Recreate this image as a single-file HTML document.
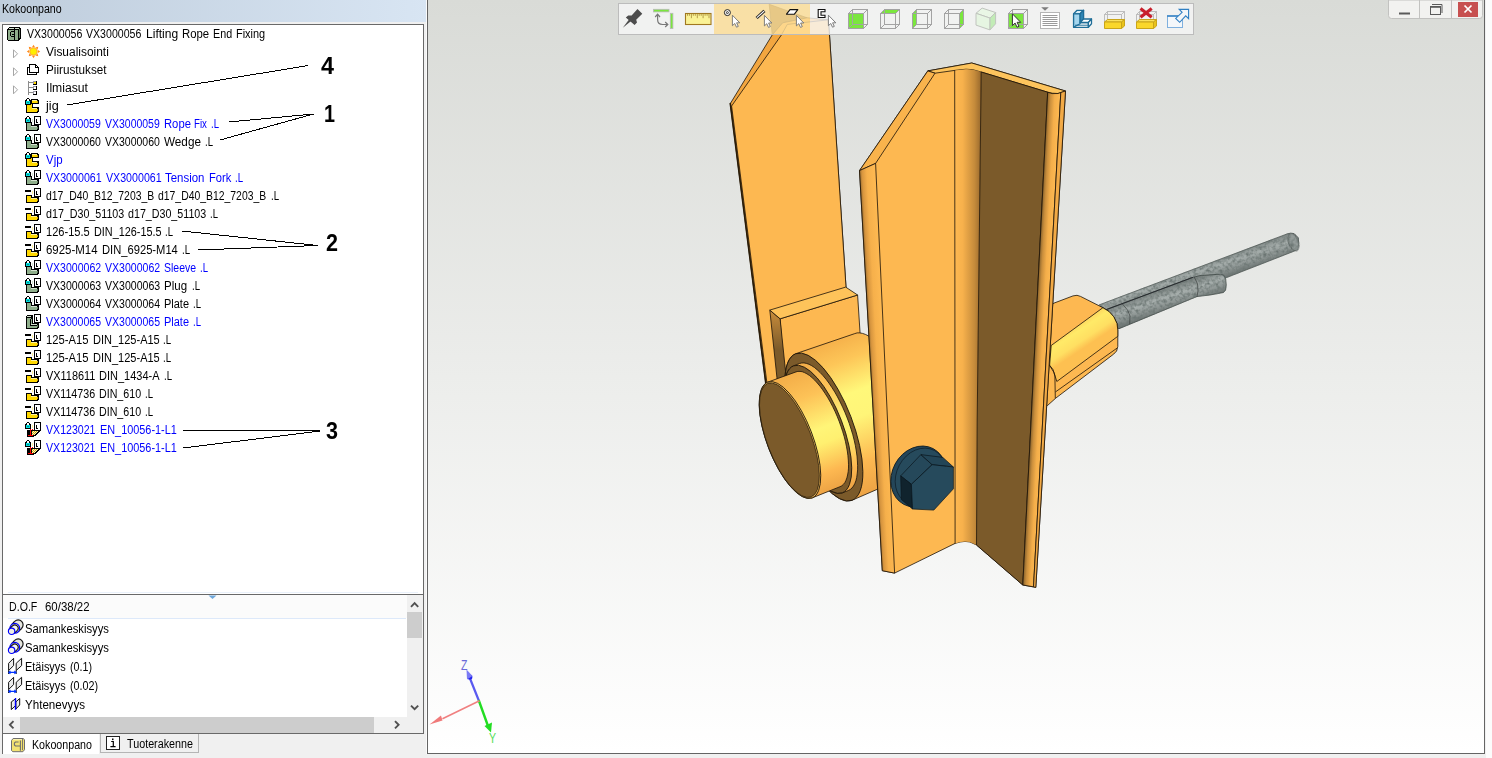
<!DOCTYPE html><html><head><meta charset="utf-8"><title>Kokoonpano</title><style>
html,body{margin:0;padding:0}body{width:1492px;height:758px;overflow:hidden;background:#f0f0f0;position:relative;font:12px 'Liberation Sans', sans-serif}
.a{position:absolute}.t{position:absolute;white-space:pre;line-height:16px;height:16px}.w{display:inline-block;transform-origin:0 50%}
svg{position:absolute;overflow:visible}
</style></head><body>
<div class="a" style="left:0;top:0;width:427px;height:22px;background:linear-gradient(to right,#bfcddc,#d8e5f3)"></div>
<div class="a" style="left:2px;top:24px;width:420px;height:729px;background:#fff;border-left:1px solid #696969;border-right:1px solid #696969;border-top:1px solid #696969"></div>
<div class="a" style="left:2px;top:594px;width:422px;height:1px;background:#696969"></div>
<div class="a" style="left:8px;top:592px;width:410px;height:1px;background:#eaf1fb"></div>
<div class="a" style="left:3px;top:595px;width:404px;height:23px;background:#fbfbfb"></div>
<div class="a" style="left:8px;top:618px;width:398px;height:1px;background:#dde9fa"></div>
<svg class="a" style="left:208px;top:595px" width="10" height="5"><path d="M0.5 0.5h8l-4 3.5z" fill="#6fa8dc"/></svg>
<div class="a" style="left:407px;top:595px;width:16px;height:122px;background:#f0f0f0"></div>
<div class="a" style="left:407px;top:612px;width:15px;height:26px;background:#cdcdcd"></div>
<svg class="a" style="left:407px;top:595px" width="16" height="122"><path d="M4 11.8l3.6-3.6l3.6 3.6" fill="none" stroke="#505050" stroke-width="1.9"/><path d="M4 110.6l3.6 3.6l3.6-3.6" fill="none" stroke="#505050" stroke-width="1.9"/></svg>
<div class="a" style="left:3px;top:717px;width:420px;height:16px;background:#f0f0f0"></div>
<div class="a" style="left:20px;top:717px;width:354px;height:16px;background:#cdcdcd"></div>
<svg class="a" style="left:3px;top:717px" width="420" height="16"><path d="M10.5 4.2l-3.6 3.6l3.6 3.6" fill="none" stroke="#505050" stroke-width="1.9"/><path d="M392 4.2l3.6 3.6l-3.6 3.6" fill="none" stroke="#505050" stroke-width="1.9"/></svg>
<div class="a" style="left:2px;top:733px;width:422px;height:1px;background:#696969"></div>
<div class="a" style="left:3px;top:734px;width:96px;height:20px;background:#fff"></div>
<div class="a" style="left:99px;top:734px;width:325px;height:20px;background:#f0f0f0"></div>
<div class="a" style="left:100px;top:734px;width:97px;height:18px;background:#f0f0f0;border-right:1px solid #b5b5b5;border-bottom:1px solid #b5b5b5;border-left:1px solid #b5b5b5"></div>
<div class="a" style="left:423px;top:734px;width:1px;height:20px;background:#f0f0f0"></div>
<svg class="a" style="left:11px;top:737px" width="16" height="16"><path d="M0.5 3.5l1.6-2h10l1.4 1.2v10l-1.6 2h-10l-1.4-1.2z" fill="#f3e272" stroke="#6e6e6e" stroke-linejoin="round"/><path d="M2.3 2.6h9.2" stroke="#fbf4b8"/><path d="M11.5 2v11.2" stroke="#6e6e6e" stroke-width="0.9"/><path d="M7.6 5h-3.2l-1 1v2l1 1h3.2M9.4 3.4v10.4M5.4 9v0M7.6 9h1.8" stroke="#6e6e6e" fill="none" stroke-width="1.1"/></svg>
<svg class="a" style="left:106px;top:736px" width="15" height="15"><rect x="0.5" y="0.5" width="13" height="13" fill="#fff" stroke="#222"/><path d="M5.2 5.5h2.1v5M4.4 10.6h5.2" stroke="#000" fill="none" stroke-width="1.2"/><rect x="6" y="2.5" width="1.5" height="1.6" fill="#000"/></svg>
<svg class="a" style="left:7px;top:27px" width="16" height="16" shape-rendering="crispEdges"><path fill="#000" d="M2 0h11v1h-11zM1 1h1v1h-1zM7 1h1v1h-1zM12 1h2v1h-2zM0 2h12v1h-12zM13 2h1v1h-1zM0 3h1v1h-1zM7 3h1v1h-1zM11 3h1v1h-1zM13 3h1v1h-1zM0 4h1v1h-1zM4 4h4v1h-4zM11 4h1v1h-1zM13 4h1v1h-1zM0 5h1v1h-1zM3 5h1v1h-1zM7 5h1v1h-1zM11 5h1v1h-1zM13 5h1v1h-1zM0 6h1v1h-1zM3 6h1v1h-1zM7 6h1v1h-1zM11 6h1v1h-1zM13 6h1v1h-1zM0 7h1v1h-1zM3 7h1v1h-1zM5 7h3v1h-3zM11 7h1v1h-1zM13 7h1v1h-1zM0 8h1v1h-1zM3 8h1v1h-1zM7 8h1v1h-1zM11 8h1v1h-1zM13 8h1v1h-1zM0 9h1v1h-1zM4 9h4v1h-4zM11 9h1v1h-1zM13 9h1v1h-1zM0 10h1v1h-1zM7 10h1v1h-1zM11 10h1v1h-1zM13 10h1v1h-1zM0 11h1v1h-1zM7 11h1v1h-1zM11 11h3v1h-3zM0 12h1v1h-1zM7 12h1v1h-1zM11 12h2v1h-2zM1 13h11v1h-11z"/><path fill="#d3e2cf" d="M2 1h5v1h-5zM8 1h4v1h-4z"/><path fill="#5f7e5b" d="M12 2h1v1h-1zM12 3h1v1h-1zM12 4h1v1h-1zM12 5h1v1h-1zM12 6h1v1h-1zM12 7h1v1h-1zM12 8h1v1h-1zM12 9h1v1h-1zM12 10h1v1h-1z"/><path fill="#8fae8b" d="M1 3h6v1h-6zM8 3h3v1h-3zM1 4h3v1h-3zM8 4h3v1h-3zM1 5h2v1h-2zM4 5h3v1h-3zM8 5h3v1h-3zM1 6h2v1h-2zM4 6h3v1h-3zM8 6h3v1h-3zM1 7h2v1h-2zM4 7h1v1h-1zM8 7h3v1h-3zM1 8h2v1h-2zM4 8h3v1h-3zM8 8h3v1h-3zM1 9h3v1h-3zM8 9h3v1h-3zM1 10h6v1h-6zM8 10h3v1h-3zM1 11h6v1h-6zM8 11h3v1h-3zM1 12h6v1h-6zM8 12h3v1h-3z"/></svg>
<svg class="a" style="left:25px;top:43px" width="16" height="18" shape-rendering="crispEdges"><g transform="translate(8.5,8.5)" shape-rendering="geometricPrecision"><path d="M-1.7 -4.1L0 -6.7L1.7 -4.1z" fill="#ff8a1e" transform="rotate(0)"/><path d="M-1.7 -4.1L0 -6.7L1.7 -4.1z" fill="#ff8a1e" transform="rotate(45)"/><path d="M-1.7 -4.1L0 -6.7L1.7 -4.1z" fill="#ff8a1e" transform="rotate(90)"/><path d="M-1.7 -4.1L0 -6.7L1.7 -4.1z" fill="#ff8a1e" transform="rotate(135)"/><path d="M-1.7 -4.1L0 -6.7L1.7 -4.1z" fill="#ff8a1e" transform="rotate(180)"/><path d="M-1.7 -4.1L0 -6.7L1.7 -4.1z" fill="#ff8a1e" transform="rotate(225)"/><path d="M-1.7 -4.1L0 -6.7L1.7 -4.1z" fill="#ff8a1e" transform="rotate(270)"/><path d="M-1.7 -4.1L0 -6.7L1.7 -4.1z" fill="#ff8a1e" transform="rotate(315)"/><circle r="3.6" fill="#ffee00" stroke="#ffa726" stroke-width="0.8"/></g></svg>
<svg class="a" style="left:12px;top:49px" width="8" height="10"><path d="M1.5 0.8l4 4l-4 4z" fill="#fff" stroke="#a6a6a6"/></svg>
<svg class="a" style="left:25px;top:61px" width="16" height="18" shape-rendering="crispEdges"><path fill="#000" d="M4 3h7v1h-7zM4 4h1v1h-1zM10 4h2v1h-2zM4 5h1v1h-1zM10 5h1v1h-1zM12 5h1v1h-1zM2 6h3v1h-3zM10 6h4v1h-4zM2 7h1v1h-1zM4 7h1v1h-1zM13 7h1v1h-1zM2 8h1v1h-1zM4 8h1v1h-1zM13 8h1v1h-1zM2 9h1v1h-1zM4 9h1v1h-1zM13 9h1v1h-1zM2 10h1v1h-1zM4 10h1v1h-1zM13 10h1v1h-1zM2 11h1v1h-1zM4 11h10v1h-10zM2 12h1v1h-1zM11 12h1v1h-1zM2 13h10v1h-10z"/><path fill="#fff" d="M5 4h5v1h-5zM5 5h5v1h-5zM11 5h1v1h-1zM5 6h5v1h-5zM3 7h1v1h-1zM5 7h8v1h-8zM3 8h1v1h-1zM5 8h8v1h-8zM3 9h1v1h-1zM5 9h8v1h-8zM3 10h1v1h-1zM5 10h8v1h-8zM3 11h1v1h-1zM3 12h8v1h-8z"/></svg>
<svg class="a" style="left:12px;top:67px" width="8" height="10"><path d="M1.5 0.8l4 4l-4 4z" fill="#fff" stroke="#a6a6a6"/></svg>
<svg class="a" style="left:25px;top:79px" width="16" height="18" shape-rendering="crispEdges"><path fill="#8c8c8c" d="M3 2h1v1h-1zM3 3h5v1h-5zM3 4h1v1h-1zM3 5h1v1h-1zM3 6h1v1h-1zM3 7h1v1h-1zM3 8h5v1h-5zM3 9h1v1h-1zM3 10h1v1h-1zM3 11h1v1h-1zM3 12h1v1h-1zM3 13h5v1h-5zM3 14h1v1h-1zM3 15h1v1h-1z"/><path fill="#9a9aa8" d="M8 2h3v1h-3zM8 3h1v1h-1zM8 4h1v1h-1zM8 7h3v1h-3zM8 8h1v1h-1zM8 9h1v1h-1zM8 12h3v1h-3zM8 13h1v1h-1zM8 14h1v1h-1z"/><path fill="#000" d="M11 2h1v1h-1zM11 3h1v1h-1zM11 4h1v1h-1zM8 5h4v1h-4zM11 7h1v1h-1zM11 8h1v1h-1zM11 9h1v1h-1zM8 10h4v1h-4zM11 12h1v1h-1zM11 13h1v1h-1zM11 14h1v1h-1zM8 15h4v1h-4z"/><path fill="#ffd800" d="M9 3h2v1h-2zM9 4h2v1h-2z"/><path fill="#fff" d="M9 8h2v1h-2zM9 9h2v1h-2zM9 13h2v1h-2zM9 14h2v1h-2z"/></svg>
<svg class="a" style="left:12px;top:85px" width="8" height="10"><path d="M1.5 0.8l4 4l-4 4z" fill="#fff" stroke="#a6a6a6"/></svg>
<svg class="a" style="left:25px;top:97px" width="16" height="18" shape-rendering="crispEdges"><path fill="#000" d="M2 1h2v1h-2zM1 2h1v1h-1zM4 2h1v1h-1zM6 2h7v1h-7zM0 3h2v1h-2zM4 3h3v1h-3zM12 3h2v1h-2zM0 4h1v1h-1zM5 4h2v1h-2zM13 4h1v1h-1zM0 5h1v1h-1zM5 5h2v1h-2zM13 5h1v1h-1zM0 6h1v1h-1zM5 6h9v1h-9zM0 7h6v1h-6zM7 7h1v1h-1zM1 8h1v1h-1zM7 8h1v1h-1zM1 9h1v1h-1zM7 9h1v1h-1zM1 10h1v1h-1zM7 10h7v1h-7zM1 11h1v1h-1zM12 11h2v1h-2zM1 12h1v1h-1zM13 12h1v1h-1zM1 13h1v1h-1zM13 13h1v1h-1zM1 14h1v1h-1zM12 14h2v1h-2zM1 15h12v1h-12z"/><path fill="#fff" d="M2 2h2v1h-2zM2 3h2v1h-2z"/><path fill="#fff29a" d="M7 3h5v1h-5zM7 11h5v1h-5z"/><path fill="#00e0e0" d="M1 4h4v1h-4zM1 5h1v1h-1zM4 5h1v1h-1zM1 6h4v1h-4z"/><path fill="#ffd800" d="M7 4h5v1h-5zM7 5h5v1h-5zM6 7h1v1h-1zM2 8h5v1h-5zM2 9h5v1h-5zM2 10h5v1h-5zM2 11h5v1h-5zM2 12h10v1h-10zM2 13h10v1h-10zM2 14h10v1h-10z"/><path fill="#caa000" d="M12 4h1v1h-1zM12 5h1v1h-1zM12 12h1v1h-1zM12 13h1v1h-1z"/><path fill="#008c8c" d="M2 5h2v1h-2z"/></svg>
<svg class="a" style="left:25px;top:115px" width="16" height="18" shape-rendering="crispEdges"><path fill="#000" d="M2 1h2v1h-2zM9 1h7v1h-7zM1 2h1v1h-1zM4 2h1v1h-1zM9 2h1v1h-1zM15 2h1v1h-1zM0 3h2v1h-2zM4 3h2v1h-2zM9 3h1v1h-1zM15 3h1v1h-1zM0 4h1v1h-1zM5 4h1v1h-1zM9 4h1v1h-1zM11 4h1v1h-1zM15 4h1v1h-1zM0 5h1v1h-1zM5 5h1v1h-1zM9 5h1v1h-1zM11 5h1v1h-1zM15 5h1v1h-1zM0 6h1v1h-1zM5 6h1v1h-1zM9 6h1v1h-1zM11 6h1v1h-1zM15 6h1v1h-1zM0 7h7v1h-7zM9 7h1v1h-1zM11 7h2v1h-2zM15 7h1v1h-1zM1 8h1v1h-1zM6 8h1v1h-1zM9 8h1v1h-1zM15 8h1v1h-1zM1 9h1v1h-1zM6 9h1v1h-1zM9 9h7v1h-7zM1 10h1v1h-1zM6 10h8v1h-8zM1 11h1v1h-1zM12 11h2v1h-2zM1 12h1v1h-1zM13 12h1v1h-1zM1 13h1v1h-1zM13 13h1v1h-1zM1 14h1v1h-1zM12 14h2v1h-2zM1 15h12v1h-12z"/><path fill="#fff" d="M2 2h2v1h-2zM10 2h5v1h-5zM2 3h2v1h-2zM10 3h5v1h-5zM10 4h1v1h-1zM12 4h3v1h-3zM10 5h1v1h-1zM12 5h3v1h-3zM10 6h1v1h-1zM12 6h3v1h-3zM10 7h1v1h-1zM13 7h2v1h-2zM10 8h5v1h-5z"/><path fill="#00e0e0" d="M1 4h4v1h-4zM1 5h1v1h-1zM4 5h1v1h-1zM1 6h4v1h-4z"/><path fill="#d3e2cf" d="M7 4h1v1h-1zM7 5h1v1h-1zM7 6h1v1h-1zM6 11h6v1h-6z"/><path fill="#008c8c" d="M2 5h2v1h-2z"/><path fill="#8fae8b" d="M2 8h4v1h-4zM2 9h4v1h-4zM2 10h4v1h-4zM2 11h4v1h-4zM2 12h10v1h-10zM2 13h10v1h-10zM2 14h10v1h-10z"/><path fill="#5f7e5b" d="M12 12h1v1h-1zM12 13h1v1h-1z"/></svg>
<svg class="a" style="left:25px;top:133px" width="16" height="18" shape-rendering="crispEdges"><path fill="#000" d="M2 1h2v1h-2zM9 1h7v1h-7zM1 2h1v1h-1zM4 2h1v1h-1zM9 2h1v1h-1zM15 2h1v1h-1zM0 3h2v1h-2zM4 3h2v1h-2zM9 3h1v1h-1zM15 3h1v1h-1zM0 4h1v1h-1zM5 4h1v1h-1zM9 4h1v1h-1zM11 4h1v1h-1zM15 4h1v1h-1zM0 5h1v1h-1zM5 5h1v1h-1zM9 5h1v1h-1zM11 5h1v1h-1zM15 5h1v1h-1zM0 6h1v1h-1zM5 6h1v1h-1zM9 6h1v1h-1zM11 6h1v1h-1zM15 6h1v1h-1zM0 7h7v1h-7zM9 7h1v1h-1zM11 7h2v1h-2zM15 7h1v1h-1zM1 8h1v1h-1zM6 8h1v1h-1zM9 8h1v1h-1zM15 8h1v1h-1zM1 9h1v1h-1zM6 9h1v1h-1zM9 9h7v1h-7zM1 10h1v1h-1zM6 10h8v1h-8zM1 11h1v1h-1zM12 11h2v1h-2zM1 12h1v1h-1zM13 12h1v1h-1zM1 13h1v1h-1zM13 13h1v1h-1zM1 14h1v1h-1zM12 14h2v1h-2zM1 15h12v1h-12z"/><path fill="#fff" d="M2 2h2v1h-2zM10 2h5v1h-5zM2 3h2v1h-2zM10 3h5v1h-5zM10 4h1v1h-1zM12 4h3v1h-3zM10 5h1v1h-1zM12 5h3v1h-3zM10 6h1v1h-1zM12 6h3v1h-3zM10 7h1v1h-1zM13 7h2v1h-2zM10 8h5v1h-5z"/><path fill="#00e0e0" d="M1 4h4v1h-4zM1 5h1v1h-1zM4 5h1v1h-1zM1 6h4v1h-4z"/><path fill="#d3e2cf" d="M7 4h1v1h-1zM7 5h1v1h-1zM7 6h1v1h-1zM6 11h6v1h-6z"/><path fill="#008c8c" d="M2 5h2v1h-2z"/><path fill="#8fae8b" d="M2 8h4v1h-4zM2 9h4v1h-4zM2 10h4v1h-4zM2 11h4v1h-4zM2 12h10v1h-10zM2 13h10v1h-10zM2 14h10v1h-10z"/><path fill="#5f7e5b" d="M12 12h1v1h-1zM12 13h1v1h-1z"/></svg>
<svg class="a" style="left:25px;top:151px" width="16" height="18" shape-rendering="crispEdges"><path fill="#000" d="M2 1h2v1h-2zM1 2h1v1h-1zM4 2h1v1h-1zM6 2h7v1h-7zM0 3h2v1h-2zM4 3h3v1h-3zM12 3h2v1h-2zM0 4h1v1h-1zM5 4h2v1h-2zM13 4h1v1h-1zM0 5h1v1h-1zM5 5h2v1h-2zM13 5h1v1h-1zM0 6h1v1h-1zM5 6h9v1h-9zM0 7h6v1h-6zM7 7h1v1h-1zM1 8h1v1h-1zM7 8h1v1h-1zM1 9h1v1h-1zM7 9h1v1h-1zM1 10h1v1h-1zM7 10h7v1h-7zM1 11h1v1h-1zM12 11h2v1h-2zM1 12h1v1h-1zM13 12h1v1h-1zM1 13h1v1h-1zM13 13h1v1h-1zM1 14h1v1h-1zM12 14h2v1h-2zM1 15h12v1h-12z"/><path fill="#fff" d="M2 2h2v1h-2zM2 3h2v1h-2z"/><path fill="#fff29a" d="M7 3h5v1h-5zM7 11h5v1h-5z"/><path fill="#00e0e0" d="M1 4h4v1h-4zM1 5h1v1h-1zM4 5h1v1h-1zM1 6h4v1h-4z"/><path fill="#ffd800" d="M7 4h5v1h-5zM7 5h5v1h-5zM6 7h1v1h-1zM2 8h5v1h-5zM2 9h5v1h-5zM2 10h5v1h-5zM2 11h5v1h-5zM2 12h10v1h-10zM2 13h10v1h-10zM2 14h10v1h-10z"/><path fill="#caa000" d="M12 4h1v1h-1zM12 5h1v1h-1zM12 12h1v1h-1zM12 13h1v1h-1z"/><path fill="#008c8c" d="M2 5h2v1h-2z"/></svg>
<svg class="a" style="left:25px;top:169px" width="16" height="18" shape-rendering="crispEdges"><path fill="#000" d="M2 1h2v1h-2zM9 1h7v1h-7zM1 2h1v1h-1zM4 2h1v1h-1zM9 2h1v1h-1zM15 2h1v1h-1zM0 3h2v1h-2zM4 3h2v1h-2zM9 3h1v1h-1zM15 3h1v1h-1zM0 4h1v1h-1zM5 4h1v1h-1zM9 4h1v1h-1zM11 4h1v1h-1zM15 4h1v1h-1zM0 5h1v1h-1zM5 5h1v1h-1zM9 5h1v1h-1zM11 5h1v1h-1zM15 5h1v1h-1zM0 6h1v1h-1zM5 6h1v1h-1zM9 6h1v1h-1zM11 6h1v1h-1zM15 6h1v1h-1zM0 7h7v1h-7zM9 7h1v1h-1zM11 7h2v1h-2zM15 7h1v1h-1zM1 8h1v1h-1zM6 8h1v1h-1zM9 8h1v1h-1zM15 8h1v1h-1zM1 9h1v1h-1zM6 9h1v1h-1zM9 9h7v1h-7zM1 10h1v1h-1zM6 10h8v1h-8zM1 11h1v1h-1zM12 11h2v1h-2zM1 12h1v1h-1zM13 12h1v1h-1zM1 13h1v1h-1zM13 13h1v1h-1zM1 14h1v1h-1zM12 14h2v1h-2zM1 15h12v1h-12z"/><path fill="#fff" d="M2 2h2v1h-2zM10 2h5v1h-5zM2 3h2v1h-2zM10 3h5v1h-5zM10 4h1v1h-1zM12 4h3v1h-3zM10 5h1v1h-1zM12 5h3v1h-3zM10 6h1v1h-1zM12 6h3v1h-3zM10 7h1v1h-1zM13 7h2v1h-2zM10 8h5v1h-5z"/><path fill="#00e0e0" d="M1 4h4v1h-4zM1 5h1v1h-1zM4 5h1v1h-1zM1 6h4v1h-4z"/><path fill="#d3e2cf" d="M7 4h1v1h-1zM7 5h1v1h-1zM7 6h1v1h-1zM6 11h6v1h-6z"/><path fill="#008c8c" d="M2 5h2v1h-2z"/><path fill="#8fae8b" d="M2 8h4v1h-4zM2 9h4v1h-4zM2 10h4v1h-4zM2 11h4v1h-4zM2 12h10v1h-10zM2 13h10v1h-10zM2 14h10v1h-10z"/><path fill="#5f7e5b" d="M12 12h1v1h-1zM12 13h1v1h-1z"/></svg>
<svg class="a" style="left:25px;top:187px" width="16" height="18" shape-rendering="crispEdges"><path fill="#000" d="M9 1h7v1h-7zM9 2h1v1h-1zM15 2h1v1h-1zM0 3h6v1h-6zM9 3h1v1h-1zM15 3h1v1h-1zM0 4h6v1h-6zM9 4h1v1h-1zM11 4h1v1h-1zM15 4h1v1h-1zM9 5h1v1h-1zM11 5h1v1h-1zM15 5h1v1h-1zM9 6h1v1h-1zM11 6h1v1h-1zM15 6h1v1h-1zM9 7h1v1h-1zM11 7h2v1h-2zM15 7h1v1h-1zM1 8h6v1h-6zM9 8h1v1h-1zM15 8h1v1h-1zM1 9h1v1h-1zM6 9h1v1h-1zM9 9h7v1h-7zM1 10h1v1h-1zM6 10h8v1h-8zM1 11h1v1h-1zM12 11h2v1h-2zM1 12h1v1h-1zM13 12h1v1h-1zM1 13h1v1h-1zM13 13h1v1h-1zM1 14h1v1h-1zM12 14h2v1h-2zM1 15h12v1h-12z"/><path fill="#fff" d="M10 2h5v1h-5zM10 3h5v1h-5zM10 4h1v1h-1zM12 4h3v1h-3zM10 5h1v1h-1zM12 5h3v1h-3zM10 6h1v1h-1zM12 6h3v1h-3zM10 7h1v1h-1zM13 7h2v1h-2zM10 8h5v1h-5z"/><path fill="#fff29a" d="M7 4h1v1h-1zM7 5h1v1h-1zM7 6h1v1h-1zM6 11h6v1h-6z"/><path fill="#ffd800" d="M2 9h4v1h-4zM2 10h4v1h-4zM2 11h4v1h-4zM2 12h10v1h-10zM2 13h10v1h-10zM2 14h10v1h-10z"/><path fill="#caa000" d="M12 12h1v1h-1zM12 13h1v1h-1z"/></svg>
<svg class="a" style="left:25px;top:205px" width="16" height="18" shape-rendering="crispEdges"><path fill="#000" d="M9 1h7v1h-7zM9 2h1v1h-1zM15 2h1v1h-1zM0 3h6v1h-6zM9 3h1v1h-1zM15 3h1v1h-1zM0 4h6v1h-6zM9 4h1v1h-1zM11 4h1v1h-1zM15 4h1v1h-1zM9 5h1v1h-1zM11 5h1v1h-1zM15 5h1v1h-1zM9 6h1v1h-1zM11 6h1v1h-1zM15 6h1v1h-1zM9 7h1v1h-1zM11 7h2v1h-2zM15 7h1v1h-1zM1 8h6v1h-6zM9 8h1v1h-1zM15 8h1v1h-1zM1 9h1v1h-1zM6 9h1v1h-1zM9 9h7v1h-7zM1 10h1v1h-1zM6 10h8v1h-8zM1 11h1v1h-1zM12 11h2v1h-2zM1 12h1v1h-1zM13 12h1v1h-1zM1 13h1v1h-1zM13 13h1v1h-1zM1 14h1v1h-1zM12 14h2v1h-2zM1 15h12v1h-12z"/><path fill="#fff" d="M10 2h5v1h-5zM10 3h5v1h-5zM10 4h1v1h-1zM12 4h3v1h-3zM10 5h1v1h-1zM12 5h3v1h-3zM10 6h1v1h-1zM12 6h3v1h-3zM10 7h1v1h-1zM13 7h2v1h-2zM10 8h5v1h-5z"/><path fill="#fff29a" d="M7 4h1v1h-1zM7 5h1v1h-1zM7 6h1v1h-1zM6 11h6v1h-6z"/><path fill="#ffd800" d="M2 9h4v1h-4zM2 10h4v1h-4zM2 11h4v1h-4zM2 12h10v1h-10zM2 13h10v1h-10zM2 14h10v1h-10z"/><path fill="#caa000" d="M12 12h1v1h-1zM12 13h1v1h-1z"/></svg>
<svg class="a" style="left:25px;top:223px" width="16" height="18" shape-rendering="crispEdges"><path fill="#000" d="M9 1h7v1h-7zM9 2h1v1h-1zM15 2h1v1h-1zM0 3h6v1h-6zM9 3h1v1h-1zM15 3h1v1h-1zM0 4h6v1h-6zM9 4h1v1h-1zM11 4h1v1h-1zM15 4h1v1h-1zM9 5h1v1h-1zM11 5h1v1h-1zM15 5h1v1h-1zM9 6h1v1h-1zM11 6h1v1h-1zM15 6h1v1h-1zM9 7h1v1h-1zM11 7h2v1h-2zM15 7h1v1h-1zM1 8h6v1h-6zM9 8h1v1h-1zM15 8h1v1h-1zM1 9h1v1h-1zM6 9h1v1h-1zM9 9h7v1h-7zM1 10h1v1h-1zM6 10h8v1h-8zM1 11h1v1h-1zM12 11h2v1h-2zM1 12h1v1h-1zM13 12h1v1h-1zM1 13h1v1h-1zM13 13h1v1h-1zM1 14h1v1h-1zM12 14h2v1h-2zM1 15h12v1h-12z"/><path fill="#fff" d="M10 2h5v1h-5zM10 3h5v1h-5zM10 4h1v1h-1zM12 4h3v1h-3zM10 5h1v1h-1zM12 5h3v1h-3zM10 6h1v1h-1zM12 6h3v1h-3zM10 7h1v1h-1zM13 7h2v1h-2zM10 8h5v1h-5z"/><path fill="#fff29a" d="M7 4h1v1h-1zM7 5h1v1h-1zM7 6h1v1h-1zM6 11h6v1h-6z"/><path fill="#ffd800" d="M2 9h4v1h-4zM2 10h4v1h-4zM2 11h4v1h-4zM2 12h10v1h-10zM2 13h10v1h-10zM2 14h10v1h-10z"/><path fill="#caa000" d="M12 12h1v1h-1zM12 13h1v1h-1z"/></svg>
<svg class="a" style="left:25px;top:241px" width="16" height="18" shape-rendering="crispEdges"><path fill="#000" d="M9 1h7v1h-7zM9 2h1v1h-1zM15 2h1v1h-1zM0 3h6v1h-6zM9 3h1v1h-1zM15 3h1v1h-1zM0 4h6v1h-6zM9 4h1v1h-1zM11 4h1v1h-1zM15 4h1v1h-1zM9 5h1v1h-1zM11 5h1v1h-1zM15 5h1v1h-1zM9 6h1v1h-1zM11 6h1v1h-1zM15 6h1v1h-1zM9 7h1v1h-1zM11 7h2v1h-2zM15 7h1v1h-1zM1 8h6v1h-6zM9 8h1v1h-1zM15 8h1v1h-1zM1 9h1v1h-1zM6 9h1v1h-1zM9 9h7v1h-7zM1 10h1v1h-1zM6 10h8v1h-8zM1 11h1v1h-1zM12 11h2v1h-2zM1 12h1v1h-1zM13 12h1v1h-1zM1 13h1v1h-1zM13 13h1v1h-1zM1 14h1v1h-1zM12 14h2v1h-2zM1 15h12v1h-12z"/><path fill="#fff" d="M10 2h5v1h-5zM10 3h5v1h-5zM10 4h1v1h-1zM12 4h3v1h-3zM10 5h1v1h-1zM12 5h3v1h-3zM10 6h1v1h-1zM12 6h3v1h-3zM10 7h1v1h-1zM13 7h2v1h-2zM10 8h5v1h-5z"/><path fill="#fff29a" d="M7 4h1v1h-1zM7 5h1v1h-1zM7 6h1v1h-1zM6 11h6v1h-6z"/><path fill="#ffd800" d="M2 9h4v1h-4zM2 10h4v1h-4zM2 11h4v1h-4zM2 12h10v1h-10zM2 13h10v1h-10zM2 14h10v1h-10z"/><path fill="#caa000" d="M12 12h1v1h-1zM12 13h1v1h-1z"/></svg>
<svg class="a" style="left:25px;top:259px" width="16" height="18" shape-rendering="crispEdges"><path fill="#000" d="M2 1h2v1h-2zM9 1h7v1h-7zM1 2h1v1h-1zM4 2h1v1h-1zM9 2h1v1h-1zM15 2h1v1h-1zM0 3h2v1h-2zM4 3h2v1h-2zM9 3h1v1h-1zM15 3h1v1h-1zM0 4h1v1h-1zM5 4h1v1h-1zM9 4h1v1h-1zM11 4h1v1h-1zM15 4h1v1h-1zM0 5h1v1h-1zM5 5h1v1h-1zM9 5h1v1h-1zM11 5h1v1h-1zM15 5h1v1h-1zM0 6h1v1h-1zM5 6h1v1h-1zM9 6h1v1h-1zM11 6h1v1h-1zM15 6h1v1h-1zM0 7h7v1h-7zM9 7h1v1h-1zM11 7h2v1h-2zM15 7h1v1h-1zM1 8h1v1h-1zM6 8h1v1h-1zM9 8h1v1h-1zM15 8h1v1h-1zM1 9h1v1h-1zM6 9h1v1h-1zM9 9h7v1h-7zM1 10h1v1h-1zM6 10h8v1h-8zM1 11h1v1h-1zM12 11h2v1h-2zM1 12h1v1h-1zM13 12h1v1h-1zM1 13h1v1h-1zM13 13h1v1h-1zM1 14h1v1h-1zM12 14h2v1h-2zM1 15h12v1h-12z"/><path fill="#fff" d="M2 2h2v1h-2zM10 2h5v1h-5zM2 3h2v1h-2zM10 3h5v1h-5zM10 4h1v1h-1zM12 4h3v1h-3zM10 5h1v1h-1zM12 5h3v1h-3zM10 6h1v1h-1zM12 6h3v1h-3zM10 7h1v1h-1zM13 7h2v1h-2zM10 8h5v1h-5z"/><path fill="#00e0e0" d="M1 4h4v1h-4zM1 5h1v1h-1zM4 5h1v1h-1zM1 6h4v1h-4z"/><path fill="#d3e2cf" d="M7 4h1v1h-1zM7 5h1v1h-1zM7 6h1v1h-1zM6 11h6v1h-6z"/><path fill="#008c8c" d="M2 5h2v1h-2z"/><path fill="#8fae8b" d="M2 8h4v1h-4zM2 9h4v1h-4zM2 10h4v1h-4zM2 11h4v1h-4zM2 12h10v1h-10zM2 13h10v1h-10zM2 14h10v1h-10z"/><path fill="#5f7e5b" d="M12 12h1v1h-1zM12 13h1v1h-1z"/></svg>
<svg class="a" style="left:25px;top:277px" width="16" height="18" shape-rendering="crispEdges"><path fill="#000" d="M2 1h2v1h-2zM9 1h7v1h-7zM1 2h1v1h-1zM4 2h1v1h-1zM9 2h1v1h-1zM15 2h1v1h-1zM0 3h2v1h-2zM4 3h2v1h-2zM9 3h1v1h-1zM15 3h1v1h-1zM0 4h1v1h-1zM5 4h1v1h-1zM9 4h1v1h-1zM11 4h1v1h-1zM15 4h1v1h-1zM0 5h1v1h-1zM5 5h1v1h-1zM9 5h1v1h-1zM11 5h1v1h-1zM15 5h1v1h-1zM0 6h1v1h-1zM5 6h1v1h-1zM9 6h1v1h-1zM11 6h1v1h-1zM15 6h1v1h-1zM0 7h7v1h-7zM9 7h1v1h-1zM11 7h2v1h-2zM15 7h1v1h-1zM1 8h1v1h-1zM6 8h1v1h-1zM9 8h1v1h-1zM15 8h1v1h-1zM1 9h1v1h-1zM6 9h1v1h-1zM9 9h7v1h-7zM1 10h1v1h-1zM6 10h8v1h-8zM1 11h1v1h-1zM12 11h2v1h-2zM1 12h1v1h-1zM13 12h1v1h-1zM1 13h1v1h-1zM13 13h1v1h-1zM1 14h1v1h-1zM12 14h2v1h-2zM1 15h12v1h-12z"/><path fill="#fff" d="M2 2h2v1h-2zM10 2h5v1h-5zM2 3h2v1h-2zM10 3h5v1h-5zM10 4h1v1h-1zM12 4h3v1h-3zM10 5h1v1h-1zM12 5h3v1h-3zM10 6h1v1h-1zM12 6h3v1h-3zM10 7h1v1h-1zM13 7h2v1h-2zM10 8h5v1h-5z"/><path fill="#00e0e0" d="M1 4h4v1h-4zM1 5h1v1h-1zM4 5h1v1h-1zM1 6h4v1h-4z"/><path fill="#d3e2cf" d="M7 4h1v1h-1zM7 5h1v1h-1zM7 6h1v1h-1zM6 11h6v1h-6z"/><path fill="#008c8c" d="M2 5h2v1h-2z"/><path fill="#8fae8b" d="M2 8h4v1h-4zM2 9h4v1h-4zM2 10h4v1h-4zM2 11h4v1h-4zM2 12h10v1h-10zM2 13h10v1h-10zM2 14h10v1h-10z"/><path fill="#5f7e5b" d="M12 12h1v1h-1zM12 13h1v1h-1z"/></svg>
<svg class="a" style="left:25px;top:295px" width="16" height="18" shape-rendering="crispEdges"><path fill="#000" d="M2 1h2v1h-2zM9 1h7v1h-7zM1 2h1v1h-1zM4 2h1v1h-1zM9 2h1v1h-1zM15 2h1v1h-1zM0 3h2v1h-2zM4 3h2v1h-2zM9 3h1v1h-1zM15 3h1v1h-1zM0 4h1v1h-1zM5 4h1v1h-1zM9 4h1v1h-1zM11 4h1v1h-1zM15 4h1v1h-1zM0 5h1v1h-1zM5 5h1v1h-1zM9 5h1v1h-1zM11 5h1v1h-1zM15 5h1v1h-1zM0 6h1v1h-1zM5 6h1v1h-1zM9 6h1v1h-1zM11 6h1v1h-1zM15 6h1v1h-1zM0 7h7v1h-7zM9 7h1v1h-1zM11 7h2v1h-2zM15 7h1v1h-1zM1 8h1v1h-1zM6 8h1v1h-1zM9 8h1v1h-1zM15 8h1v1h-1zM1 9h1v1h-1zM6 9h1v1h-1zM9 9h7v1h-7zM1 10h1v1h-1zM6 10h8v1h-8zM1 11h1v1h-1zM12 11h2v1h-2zM1 12h1v1h-1zM13 12h1v1h-1zM1 13h1v1h-1zM13 13h1v1h-1zM1 14h1v1h-1zM12 14h2v1h-2zM1 15h12v1h-12z"/><path fill="#fff" d="M2 2h2v1h-2zM10 2h5v1h-5zM2 3h2v1h-2zM10 3h5v1h-5zM10 4h1v1h-1zM12 4h3v1h-3zM10 5h1v1h-1zM12 5h3v1h-3zM10 6h1v1h-1zM12 6h3v1h-3zM10 7h1v1h-1zM13 7h2v1h-2zM10 8h5v1h-5z"/><path fill="#00e0e0" d="M1 4h4v1h-4zM1 5h1v1h-1zM4 5h1v1h-1zM1 6h4v1h-4z"/><path fill="#d3e2cf" d="M7 4h1v1h-1zM7 5h1v1h-1zM7 6h1v1h-1zM6 11h6v1h-6z"/><path fill="#008c8c" d="M2 5h2v1h-2z"/><path fill="#8fae8b" d="M2 8h4v1h-4zM2 9h4v1h-4zM2 10h4v1h-4zM2 11h4v1h-4zM2 12h10v1h-10zM2 13h10v1h-10zM2 14h10v1h-10z"/><path fill="#5f7e5b" d="M12 12h1v1h-1zM12 13h1v1h-1z"/></svg>
<svg class="a" style="left:25px;top:313px" width="16" height="18" shape-rendering="crispEdges"><path fill="#000" d="M9 1h7v1h-7zM2 2h6v1h-6zM9 2h1v1h-1zM15 2h1v1h-1zM1 3h1v1h-1zM6 3h2v1h-2zM9 3h1v1h-1zM15 3h1v1h-1zM1 4h7v1h-7zM9 4h1v1h-1zM11 4h1v1h-1zM15 4h1v1h-1zM1 5h1v1h-1zM6 5h2v1h-2zM9 5h1v1h-1zM11 5h1v1h-1zM15 5h1v1h-1zM1 6h1v1h-1zM5 6h1v1h-1zM7 6h1v1h-1zM9 6h1v1h-1zM11 6h1v1h-1zM15 6h1v1h-1zM1 7h1v1h-1zM5 7h1v1h-1zM7 7h1v1h-1zM9 7h1v1h-1zM11 7h2v1h-2zM15 7h1v1h-1zM1 8h1v1h-1zM5 8h1v1h-1zM7 8h1v1h-1zM9 8h1v1h-1zM15 8h1v1h-1zM1 9h1v1h-1zM5 9h1v1h-1zM7 9h1v1h-1zM9 9h7v1h-7zM1 10h1v1h-1zM5 10h1v1h-1zM7 10h7v1h-7zM1 11h1v1h-1zM5 11h1v1h-1zM12 11h2v1h-2zM1 12h1v1h-1zM5 12h7v1h-7zM13 12h1v1h-1zM1 13h1v1h-1zM13 13h1v1h-1zM1 14h1v1h-1zM12 14h2v1h-2zM1 15h12v1h-12z"/><path fill="#fff" d="M10 2h5v1h-5zM10 3h5v1h-5zM10 4h1v1h-1zM12 4h3v1h-3zM10 5h1v1h-1zM12 5h3v1h-3zM10 6h1v1h-1zM12 6h3v1h-3zM10 7h1v1h-1zM13 7h2v1h-2zM10 8h5v1h-5z"/><path fill="#d3e2cf" d="M2 3h4v1h-4zM6 11h6v1h-6z"/><path fill="#8fae8b" d="M2 5h4v1h-4zM2 6h3v1h-3zM6 6h1v1h-1zM2 7h3v1h-3zM6 7h1v1h-1zM2 8h3v1h-3zM6 8h1v1h-1zM2 9h3v1h-3zM6 9h1v1h-1zM2 10h3v1h-3zM6 10h1v1h-1zM2 11h3v1h-3zM2 12h3v1h-3zM2 13h10v1h-10zM2 14h10v1h-10z"/><path fill="#5f7e5b" d="M12 12h1v1h-1zM12 13h1v1h-1z"/></svg>
<svg class="a" style="left:25px;top:331px" width="16" height="18" shape-rendering="crispEdges"><path fill="#000" d="M9 1h7v1h-7zM9 2h1v1h-1zM15 2h1v1h-1zM0 3h6v1h-6zM9 3h1v1h-1zM15 3h1v1h-1zM0 4h6v1h-6zM9 4h1v1h-1zM11 4h1v1h-1zM15 4h1v1h-1zM9 5h1v1h-1zM11 5h1v1h-1zM15 5h1v1h-1zM9 6h1v1h-1zM11 6h1v1h-1zM15 6h1v1h-1zM9 7h1v1h-1zM11 7h2v1h-2zM15 7h1v1h-1zM1 8h6v1h-6zM9 8h1v1h-1zM15 8h1v1h-1zM1 9h1v1h-1zM6 9h1v1h-1zM9 9h7v1h-7zM1 10h1v1h-1zM6 10h8v1h-8zM1 11h1v1h-1zM12 11h2v1h-2zM1 12h1v1h-1zM13 12h1v1h-1zM1 13h1v1h-1zM13 13h1v1h-1zM1 14h1v1h-1zM12 14h2v1h-2zM1 15h12v1h-12z"/><path fill="#fff" d="M10 2h5v1h-5zM10 3h5v1h-5zM10 4h1v1h-1zM12 4h3v1h-3zM10 5h1v1h-1zM12 5h3v1h-3zM10 6h1v1h-1zM12 6h3v1h-3zM10 7h1v1h-1zM13 7h2v1h-2zM10 8h5v1h-5z"/><path fill="#fff29a" d="M7 4h1v1h-1zM7 5h1v1h-1zM7 6h1v1h-1zM6 11h6v1h-6z"/><path fill="#ffd800" d="M2 9h4v1h-4zM2 10h4v1h-4zM2 11h4v1h-4zM2 12h10v1h-10zM2 13h10v1h-10zM2 14h10v1h-10z"/><path fill="#caa000" d="M12 12h1v1h-1zM12 13h1v1h-1z"/></svg>
<svg class="a" style="left:25px;top:349px" width="16" height="18" shape-rendering="crispEdges"><path fill="#000" d="M9 1h7v1h-7zM9 2h1v1h-1zM15 2h1v1h-1zM0 3h6v1h-6zM9 3h1v1h-1zM15 3h1v1h-1zM0 4h6v1h-6zM9 4h1v1h-1zM11 4h1v1h-1zM15 4h1v1h-1zM9 5h1v1h-1zM11 5h1v1h-1zM15 5h1v1h-1zM9 6h1v1h-1zM11 6h1v1h-1zM15 6h1v1h-1zM9 7h1v1h-1zM11 7h2v1h-2zM15 7h1v1h-1zM1 8h6v1h-6zM9 8h1v1h-1zM15 8h1v1h-1zM1 9h1v1h-1zM6 9h1v1h-1zM9 9h7v1h-7zM1 10h1v1h-1zM6 10h8v1h-8zM1 11h1v1h-1zM12 11h2v1h-2zM1 12h1v1h-1zM13 12h1v1h-1zM1 13h1v1h-1zM13 13h1v1h-1zM1 14h1v1h-1zM12 14h2v1h-2zM1 15h12v1h-12z"/><path fill="#fff" d="M10 2h5v1h-5zM10 3h5v1h-5zM10 4h1v1h-1zM12 4h3v1h-3zM10 5h1v1h-1zM12 5h3v1h-3zM10 6h1v1h-1zM12 6h3v1h-3zM10 7h1v1h-1zM13 7h2v1h-2zM10 8h5v1h-5z"/><path fill="#fff29a" d="M7 4h1v1h-1zM7 5h1v1h-1zM7 6h1v1h-1zM6 11h6v1h-6z"/><path fill="#ffd800" d="M2 9h4v1h-4zM2 10h4v1h-4zM2 11h4v1h-4zM2 12h10v1h-10zM2 13h10v1h-10zM2 14h10v1h-10z"/><path fill="#caa000" d="M12 12h1v1h-1zM12 13h1v1h-1z"/></svg>
<svg class="a" style="left:25px;top:367px" width="16" height="18" shape-rendering="crispEdges"><path fill="#000" d="M9 1h7v1h-7zM9 2h1v1h-1zM15 2h1v1h-1zM0 3h6v1h-6zM9 3h1v1h-1zM15 3h1v1h-1zM0 4h6v1h-6zM9 4h1v1h-1zM11 4h1v1h-1zM15 4h1v1h-1zM9 5h1v1h-1zM11 5h1v1h-1zM15 5h1v1h-1zM9 6h1v1h-1zM11 6h1v1h-1zM15 6h1v1h-1zM9 7h1v1h-1zM11 7h2v1h-2zM15 7h1v1h-1zM1 8h6v1h-6zM9 8h1v1h-1zM15 8h1v1h-1zM1 9h1v1h-1zM6 9h1v1h-1zM9 9h7v1h-7zM1 10h1v1h-1zM6 10h8v1h-8zM1 11h1v1h-1zM12 11h2v1h-2zM1 12h1v1h-1zM13 12h1v1h-1zM1 13h1v1h-1zM13 13h1v1h-1zM1 14h1v1h-1zM12 14h2v1h-2zM1 15h12v1h-12z"/><path fill="#fff" d="M10 2h5v1h-5zM10 3h5v1h-5zM10 4h1v1h-1zM12 4h3v1h-3zM10 5h1v1h-1zM12 5h3v1h-3zM10 6h1v1h-1zM12 6h3v1h-3zM10 7h1v1h-1zM13 7h2v1h-2zM10 8h5v1h-5z"/><path fill="#fff29a" d="M7 4h1v1h-1zM7 5h1v1h-1zM7 6h1v1h-1zM6 11h6v1h-6z"/><path fill="#ffd800" d="M2 9h4v1h-4zM2 10h4v1h-4zM2 11h4v1h-4zM2 12h10v1h-10zM2 13h10v1h-10zM2 14h10v1h-10z"/><path fill="#caa000" d="M12 12h1v1h-1zM12 13h1v1h-1z"/></svg>
<svg class="a" style="left:25px;top:385px" width="16" height="18" shape-rendering="crispEdges"><path fill="#000" d="M9 1h7v1h-7zM9 2h1v1h-1zM15 2h1v1h-1zM0 3h6v1h-6zM9 3h1v1h-1zM15 3h1v1h-1zM0 4h6v1h-6zM9 4h1v1h-1zM11 4h1v1h-1zM15 4h1v1h-1zM9 5h1v1h-1zM11 5h1v1h-1zM15 5h1v1h-1zM9 6h1v1h-1zM11 6h1v1h-1zM15 6h1v1h-1zM9 7h1v1h-1zM11 7h2v1h-2zM15 7h1v1h-1zM1 8h6v1h-6zM9 8h1v1h-1zM15 8h1v1h-1zM1 9h1v1h-1zM6 9h1v1h-1zM9 9h7v1h-7zM1 10h1v1h-1zM6 10h8v1h-8zM1 11h1v1h-1zM12 11h2v1h-2zM1 12h1v1h-1zM13 12h1v1h-1zM1 13h1v1h-1zM13 13h1v1h-1zM1 14h1v1h-1zM12 14h2v1h-2zM1 15h12v1h-12z"/><path fill="#fff" d="M10 2h5v1h-5zM10 3h5v1h-5zM10 4h1v1h-1zM12 4h3v1h-3zM10 5h1v1h-1zM12 5h3v1h-3zM10 6h1v1h-1zM12 6h3v1h-3zM10 7h1v1h-1zM13 7h2v1h-2zM10 8h5v1h-5z"/><path fill="#fff29a" d="M7 4h1v1h-1zM7 5h1v1h-1zM7 6h1v1h-1zM6 11h6v1h-6z"/><path fill="#ffd800" d="M2 9h4v1h-4zM2 10h4v1h-4zM2 11h4v1h-4zM2 12h10v1h-10zM2 13h10v1h-10zM2 14h10v1h-10z"/><path fill="#caa000" d="M12 12h1v1h-1zM12 13h1v1h-1z"/></svg>
<svg class="a" style="left:25px;top:403px" width="16" height="18" shape-rendering="crispEdges"><path fill="#000" d="M9 1h7v1h-7zM9 2h1v1h-1zM15 2h1v1h-1zM0 3h6v1h-6zM9 3h1v1h-1zM15 3h1v1h-1zM0 4h6v1h-6zM9 4h1v1h-1zM11 4h1v1h-1zM15 4h1v1h-1zM9 5h1v1h-1zM11 5h1v1h-1zM15 5h1v1h-1zM9 6h1v1h-1zM11 6h1v1h-1zM15 6h1v1h-1zM9 7h1v1h-1zM11 7h2v1h-2zM15 7h1v1h-1zM1 8h6v1h-6zM9 8h1v1h-1zM15 8h1v1h-1zM1 9h1v1h-1zM6 9h1v1h-1zM9 9h7v1h-7zM1 10h1v1h-1zM6 10h8v1h-8zM1 11h1v1h-1zM12 11h2v1h-2zM1 12h1v1h-1zM13 12h1v1h-1zM1 13h1v1h-1zM13 13h1v1h-1zM1 14h1v1h-1zM12 14h2v1h-2zM1 15h12v1h-12z"/><path fill="#fff" d="M10 2h5v1h-5zM10 3h5v1h-5zM10 4h1v1h-1zM12 4h3v1h-3zM10 5h1v1h-1zM12 5h3v1h-3zM10 6h1v1h-1zM12 6h3v1h-3zM10 7h1v1h-1zM13 7h2v1h-2zM10 8h5v1h-5z"/><path fill="#fff29a" d="M7 4h1v1h-1zM7 5h1v1h-1zM7 6h1v1h-1zM6 11h6v1h-6z"/><path fill="#ffd800" d="M2 9h4v1h-4zM2 10h4v1h-4zM2 11h4v1h-4zM2 12h10v1h-10zM2 13h10v1h-10zM2 14h10v1h-10z"/><path fill="#caa000" d="M12 12h1v1h-1zM12 13h1v1h-1z"/></svg>
<svg class="a" style="left:25px;top:421px" width="16" height="18" shape-rendering="crispEdges"><path fill="#000" d="M2 1h2v1h-2zM9 1h7v1h-7zM1 2h1v1h-1zM4 2h1v1h-1zM9 2h1v1h-1zM15 2h1v1h-1zM0 3h2v1h-2zM4 3h2v1h-2zM9 3h1v1h-1zM15 3h1v1h-1zM0 4h1v1h-1zM5 4h1v1h-1zM9 4h1v1h-1zM11 4h1v1h-1zM15 4h1v1h-1zM0 5h1v1h-1zM5 5h1v1h-1zM9 5h1v1h-1zM11 5h1v1h-1zM15 5h1v1h-1zM0 6h1v1h-1zM5 6h1v1h-1zM9 6h1v1h-1zM11 6h1v1h-1zM15 6h1v1h-1zM0 7h6v1h-6zM9 7h1v1h-1zM11 7h2v1h-2zM15 7h1v1h-1zM9 8h1v1h-1zM15 8h1v1h-1zM2 9h3v1h-3zM6 9h10v1h-10zM2 10h3v1h-3zM6 10h1v1h-1zM13 10h2v1h-2zM2 11h3v1h-3zM6 11h1v1h-1zM12 11h2v1h-2zM2 12h3v1h-3zM6 12h1v1h-1zM11 12h2v1h-2zM2 13h3v1h-3zM6 13h1v1h-1zM10 13h2v1h-2zM2 14h1v1h-1zM8 14h3v1h-3zM2 15h7v1h-7z"/><path fill="#fff" d="M2 2h2v1h-2zM10 2h5v1h-5zM2 3h2v1h-2zM10 3h5v1h-5zM10 4h1v1h-1zM12 4h3v1h-3zM10 5h1v1h-1zM12 5h3v1h-3zM10 6h1v1h-1zM12 6h3v1h-3zM10 7h1v1h-1zM13 7h2v1h-2zM10 8h5v1h-5z"/><path fill="#00e0e0" d="M1 4h4v1h-4zM1 5h1v1h-1zM4 5h1v1h-1zM1 6h4v1h-4z"/><path fill="#fff29a" d="M7 4h1v1h-1zM7 5h1v1h-1zM7 6h1v1h-1z"/><path fill="#008c8c" d="M2 5h2v1h-2z"/><path fill="#ff0000" d="M5 8h1v1h-1zM7 8h1v1h-1zM5 9h1v1h-1zM5 10h1v1h-1zM5 11h1v1h-1zM5 12h1v1h-1zM5 13h1v1h-1zM3 14h5v1h-5z"/><path fill="#c9a51a" d="M7 10h1v1h-1zM9 10h1v1h-1zM11 10h1v1h-1zM8 11h1v1h-1zM10 11h1v1h-1zM7 12h1v1h-1zM9 12h1v1h-1zM8 13h1v1h-1z"/><path fill="#fff8b0" d="M8 10h1v1h-1zM10 10h1v1h-1zM12 10h1v1h-1zM7 11h1v1h-1zM9 11h1v1h-1zM11 11h1v1h-1zM8 12h1v1h-1zM10 12h1v1h-1zM7 13h1v1h-1zM9 13h1v1h-1z"/></svg>
<svg class="a" style="left:25px;top:439px" width="16" height="18" shape-rendering="crispEdges"><path fill="#000" d="M2 1h2v1h-2zM9 1h7v1h-7zM1 2h1v1h-1zM4 2h1v1h-1zM9 2h1v1h-1zM15 2h1v1h-1zM0 3h2v1h-2zM4 3h2v1h-2zM9 3h1v1h-1zM15 3h1v1h-1zM0 4h1v1h-1zM5 4h1v1h-1zM9 4h1v1h-1zM11 4h1v1h-1zM15 4h1v1h-1zM0 5h1v1h-1zM5 5h1v1h-1zM9 5h1v1h-1zM11 5h1v1h-1zM15 5h1v1h-1zM0 6h1v1h-1zM5 6h1v1h-1zM9 6h1v1h-1zM11 6h1v1h-1zM15 6h1v1h-1zM0 7h6v1h-6zM9 7h1v1h-1zM11 7h2v1h-2zM15 7h1v1h-1zM9 8h1v1h-1zM15 8h1v1h-1zM2 9h3v1h-3zM6 9h10v1h-10zM2 10h3v1h-3zM6 10h1v1h-1zM13 10h2v1h-2zM2 11h3v1h-3zM6 11h1v1h-1zM12 11h2v1h-2zM2 12h3v1h-3zM6 12h1v1h-1zM11 12h2v1h-2zM2 13h3v1h-3zM6 13h1v1h-1zM10 13h2v1h-2zM2 14h1v1h-1zM8 14h3v1h-3zM2 15h7v1h-7z"/><path fill="#fff" d="M2 2h2v1h-2zM10 2h5v1h-5zM2 3h2v1h-2zM10 3h5v1h-5zM10 4h1v1h-1zM12 4h3v1h-3zM10 5h1v1h-1zM12 5h3v1h-3zM10 6h1v1h-1zM12 6h3v1h-3zM10 7h1v1h-1zM13 7h2v1h-2zM10 8h5v1h-5z"/><path fill="#00e0e0" d="M1 4h4v1h-4zM1 5h1v1h-1zM4 5h1v1h-1zM1 6h4v1h-4z"/><path fill="#fff29a" d="M7 4h1v1h-1zM7 5h1v1h-1zM7 6h1v1h-1z"/><path fill="#008c8c" d="M2 5h2v1h-2z"/><path fill="#ff0000" d="M5 8h1v1h-1zM7 8h1v1h-1zM5 9h1v1h-1zM5 10h1v1h-1zM5 11h1v1h-1zM5 12h1v1h-1zM5 13h1v1h-1zM3 14h5v1h-5z"/><path fill="#c9a51a" d="M7 10h1v1h-1zM9 10h1v1h-1zM11 10h1v1h-1zM8 11h1v1h-1zM10 11h1v1h-1zM7 12h1v1h-1zM9 12h1v1h-1zM8 13h1v1h-1z"/><path fill="#fff8b0" d="M8 10h1v1h-1zM10 10h1v1h-1zM12 10h1v1h-1zM7 11h1v1h-1zM9 11h1v1h-1zM11 11h1v1h-1zM8 12h1v1h-1zM10 12h1v1h-1zM7 13h1v1h-1zM9 13h1v1h-1z"/></svg>
<svg class="a" style="left:7px;top:619px" width="18" height="19"><g stroke-width="1.15" shape-rendering="geometricPrecision"><circle cx="11.2" cy="5.8" r="4.9" stroke="#111" fill="#e6e6de"/><path d="M4.3 5.8L7.7 2.3L14.7 9.3L11.3 12.8Z" fill="#e6e6de" stroke="none"/><path d="M4.3 5.8L7.7 2.3M11.3 12.8L14.7 9.3" stroke="#111" fill="none"/><circle cx="7.8" cy="9.3" r="4.9" stroke="#0000ff" fill="#f6f6ee"/><path d="M5.4 7A3.3 3.3 0 0 1 10.2 11.6" stroke="#111" fill="none"/><path d="M2.2 10L5.4 7M6.9 14.6L10.2 11.6" stroke="#111" fill="none"/><circle cx="4.6" cy="12.3" r="3.2" stroke="#0000ff" fill="#efefe6"/></g></svg>
<svg class="a" style="left:7px;top:638px" width="18" height="19"><g stroke-width="1.15" shape-rendering="geometricPrecision"><circle cx="11.2" cy="5.8" r="4.9" stroke="#111" fill="#e6e6de"/><path d="M4.3 5.8L7.7 2.3L14.7 9.3L11.3 12.8Z" fill="#e6e6de" stroke="none"/><path d="M4.3 5.8L7.7 2.3M11.3 12.8L14.7 9.3" stroke="#111" fill="none"/><circle cx="7.8" cy="9.3" r="4.9" stroke="#0000ff" fill="#f6f6ee"/><path d="M5.4 7A3.3 3.3 0 0 1 10.2 11.6" stroke="#111" fill="none"/><path d="M2.2 10L5.4 7M6.9 14.6L10.2 11.6" stroke="#111" fill="none"/><circle cx="4.6" cy="12.3" r="3.2" stroke="#0000ff" fill="#efefe6"/></g></svg>
<svg class="a" style="left:7px;top:657px" width="18" height="19"><g fill="#ececec" stroke="#111" stroke-width="1" shape-rendering="geometricPrecision"><path d="M1.6 6.3L6.6 1.3V8.6L1.6 13.5Z"/><path d="M9.2 6.3L14.6 1.3V8.6L9.2 13.5Z"/><path d="M1.6 13.5V17M9.2 13.5V17" fill="none"/></g><path d="M1.8 15.4H9M3.4 14l-1.6 1.4l1.6 1.4M7.4 14l1.6 1.4l-1.6 1.4" stroke="#0033ff" stroke-width="1.1" fill="none" shape-rendering="geometricPrecision"/></svg>
<svg class="a" style="left:7px;top:676px" width="18" height="19"><g fill="#ececec" stroke="#111" stroke-width="1" shape-rendering="geometricPrecision"><path d="M1.6 6.3L6.6 1.3V8.6L1.6 13.5Z"/><path d="M9.2 6.3L14.6 1.3V8.6L9.2 13.5Z"/><path d="M1.6 13.5V17M9.2 13.5V17" fill="none"/></g><path d="M1.8 15.4H9M3.4 14l-1.6 1.4l1.6 1.4M7.4 14l1.6 1.4l-1.6 1.4" stroke="#0033ff" stroke-width="1.1" fill="none" shape-rendering="geometricPrecision"/></svg>
<svg class="a" style="left:7px;top:695px" width="18" height="19"><g fill="#ececec" stroke="#111" stroke-width="1" shape-rendering="geometricPrecision"><path d="M4.3 6.9L8.5 3.8V10.7L4.3 14.6Z"/><path d="M8.9 6.9L12.7 3.5V10L8.9 14Z"/></g><path d="M8.5 3V14.8" stroke="#0000ff" stroke-width="1.4" shape-rendering="geometricPrecision"/></svg>
<svg class="a" style="left:0;top:0" width="427" height="600"><g stroke="#000" stroke-width="1" fill="none" shape-rendering="crispEdges"><path d="M67 105L308.5 65.5"/><path d="M229 122L313.5 114L220 140"/><path d="M182 231L317.5 245.5L198 250"/><path d="M183 430L320.5 431L183 448"/></g></svg>
<div class="t" style="left:27.0px;top:25.5px;font:normal 12px 'Liberation Sans', sans-serif;line-height:16px;color:#000;word-spacing:0.69px"><span class="w" style="transform:scaleX(0.8823);margin-right:-7.39px">VX3000056</span> <span class="w" style="transform:scaleX(0.8823);margin-right:-7.39px">VX3000056</span> <span class="w" style="transform:scaleX(1.0053);margin-right:0.17px">Lifting</span> <span class="w" style="transform:scaleX(0.9471);margin-right:-1.52px">Rope</span> <span class="w" style="transform:scaleX(0.8952);margin-right:-2.24px">End</span> <span class="w" style="transform:scaleX(0.9115);margin-right:-2.83px">Fixing</span></div>
<div class="t" style="left:46.0px;top:43.5px;font:normal 12px 'Liberation Sans', sans-serif;line-height:16px;color:#000;word-spacing:0.72px"><span class="w" style="transform:scaleX(0.9944);margin-right:-0.36px">Visualisointi</span></div>
<div class="t" style="left:46.0px;top:61.5px;font:normal 12px 'Liberation Sans', sans-serif;line-height:16px;color:#000;word-spacing:0.70px"><span class="w" style="transform:scaleX(0.9753);margin-right:-1.53px">Piirustukset</span></div>
<div class="t" style="left:46.0px;top:79.5px;font:normal 12px 'Liberation Sans', sans-serif;line-height:16px;color:#000;word-spacing:0.76px"><span class="w" style="transform:scaleX(1.0159);margin-right:0.66px">Ilmiasut</span></div>
<div class="t" style="left:46.0px;top:97.5px;font:normal 12px 'Liberation Sans', sans-serif;line-height:16px;color:#000;word-spacing:0.57px"><span class="w" style="transform:scaleX(1.0570);margin-right:0.68px">jig</span></div>
<div class="t" style="left:46.0px;top:115.5px;font:normal 12px 'Liberation Sans', sans-serif;line-height:16px;color:#0000ff;word-spacing:0.65px"><span class="w" style="transform:scaleX(0.8732);margin-right:-7.96px">VX3000059</span> <span class="w" style="transform:scaleX(0.8732);margin-right:-7.96px">VX3000059</span> <span class="w" style="transform:scaleX(0.9374);margin-right:-1.80px">Rope</span> <span class="w" style="transform:scaleX(0.8092);margin-right:-3.05px">Fix</span> <span class="w" style="transform:scaleX(0.7955);margin-right:-2.05px">.L</span></div>
<div class="t" style="left:46.0px;top:133.5px;font:normal 12px 'Liberation Sans', sans-serif;line-height:16px;color:#000;word-spacing:0.66px"><span class="w" style="transform:scaleX(0.8751);margin-right:-7.83px">VX3000060</span> <span class="w" style="transform:scaleX(0.8751);margin-right:-7.83px">VX3000060</span> <span class="w" style="transform:scaleX(0.9768);margin-right:-0.88px">Wedge</span> <span class="w" style="transform:scaleX(0.7973);margin-right:-2.03px">.L</span></div>
<div class="t" style="left:46.0px;top:151.5px;font:normal 12px 'Liberation Sans', sans-serif;line-height:16px;color:#0000ff;word-spacing:0.57px"><span class="w" style="transform:scaleX(0.9571);margin-right:-0.74px">Vjp</span></div>
<div class="t" style="left:46.0px;top:169.5px;font:normal 12px 'Liberation Sans', sans-serif;line-height:16px;color:#0000ff;word-spacing:0.71px"><span class="w" style="transform:scaleX(0.8871);margin-right:-7.09px">VX3000061</span> <span class="w" style="transform:scaleX(0.8871);margin-right:-7.09px">VX3000061</span> <span class="w" style="transform:scaleX(0.9537);margin-right:-1.91px">Tension</span> <span class="w" style="transform:scaleX(0.9275);margin-right:-1.74px">Fork</span> <span class="w" style="transform:scaleX(0.8082);margin-right:-1.92px">.L</span></div>
<div class="t" style="left:46.0px;top:187.5px;font:normal 12px 'Liberation Sans', sans-serif;line-height:16px;color:#000;word-spacing:0.71px"><span class="w" style="transform:scaleX(0.8672);margin-right:-16.57px">d17_D40_B12_7203_B</span> <span class="w" style="transform:scaleX(0.8672);margin-right:-16.57px">d17_D40_B12_7203_B</span> <span class="w" style="transform:scaleX(0.8078);margin-right:-1.93px">.L</span></div>
<div class="t" style="left:46.0px;top:205.5px;font:normal 12px 'Liberation Sans', sans-serif;line-height:16px;color:#000;word-spacing:0.63px"><span class="w" style="transform:scaleX(0.8902);margin-right:-9.65px">d17_D30_51103</span> <span class="w" style="transform:scaleX(0.8902);margin-right:-9.65px">d17_D30_51103</span> <span class="w" style="transform:scaleX(0.7909);margin-right:-2.09px">.L</span></div>
<div class="t" style="left:46.0px;top:223.5px;font:normal 12px 'Liberation Sans', sans-serif;line-height:16px;color:#000;word-spacing:0.64px"><span class="w" style="transform:scaleX(0.9222);margin-right:-3.68px">126-15.5</span> <span class="w" style="transform:scaleX(0.9037);margin-right:-7.20px">DIN_126-15.5</span> <span class="w" style="transform:scaleX(0.7931);margin-right:-2.07px">.L</span></div>
<div class="t" style="left:46.0px;top:241.5px;font:normal 12px 'Liberation Sans', sans-serif;line-height:16px;color:#000;word-spacing:0.71px"><span class="w" style="transform:scaleX(0.9543);margin-right:-2.47px">6925-M14</span> <span class="w" style="transform:scaleX(0.9320);margin-right:-5.53px">DIN_6925-M14</span> <span class="w" style="transform:scaleX(0.8078);margin-right:-1.93px">.L</span></div>
<div class="t" style="left:46.0px;top:259.5px;font:normal 12px 'Liberation Sans', sans-serif;line-height:16px;color:#0000ff;word-spacing:0.68px"><span class="w" style="transform:scaleX(0.8789);margin-right:-7.60px">VX3000062</span> <span class="w" style="transform:scaleX(0.8789);margin-right:-7.60px">VX3000062</span> <span class="w" style="transform:scaleX(0.8740);margin-right:-4.62px">Sleeve</span> <span class="w" style="transform:scaleX(0.8007);margin-right:-2.00px">.L</span></div>
<div class="t" style="left:46.0px;top:277.5px;font:normal 12px 'Liberation Sans', sans-serif;line-height:16px;color:#000;word-spacing:0.68px"><span class="w" style="transform:scaleX(0.8796);margin-right:-7.55px">VX3000063</span> <span class="w" style="transform:scaleX(0.8796);margin-right:-7.55px">VX3000063</span> <span class="w" style="transform:scaleX(0.9602);margin-right:-0.96px">Plug</span> <span class="w" style="transform:scaleX(0.8014);margin-right:-1.99px">.L</span></div>
<div class="t" style="left:46.0px;top:295.5px;font:normal 12px 'Liberation Sans', sans-serif;line-height:16px;color:#000;word-spacing:0.67px"><span class="w" style="transform:scaleX(0.8773);margin-right:-7.70px">VX3000064</span> <span class="w" style="transform:scaleX(0.8773);margin-right:-7.70px">VX3000064</span> <span class="w" style="transform:scaleX(0.9144);margin-right:-2.34px">Plate</span> <span class="w" style="transform:scaleX(0.7993);margin-right:-2.01px">.L</span></div>
<div class="t" style="left:46.0px;top:313.5px;font:normal 12px 'Liberation Sans', sans-serif;line-height:16px;color:#0000ff;word-spacing:0.67px"><span class="w" style="transform:scaleX(0.8773);margin-right:-7.70px">VX3000065</span> <span class="w" style="transform:scaleX(0.8773);margin-right:-7.70px">VX3000065</span> <span class="w" style="transform:scaleX(0.9144);margin-right:-2.34px">Plate</span> <span class="w" style="transform:scaleX(0.7993);margin-right:-2.01px">.L</span></div>
<div class="t" style="left:46.0px;top:331.5px;font:normal 12px 'Liberation Sans', sans-serif;line-height:16px;color:#000;word-spacing:0.71px"><span class="w" style="transform:scaleX(0.9361);margin-right:-2.90px">125-A15</span> <span class="w" style="transform:scaleX(0.9179);margin-right:-5.97px">DIN_125-A15</span> <span class="w" style="transform:scaleX(0.8078);margin-right:-1.93px">.L</span></div>
<div class="t" style="left:46.0px;top:349.5px;font:normal 12px 'Liberation Sans', sans-serif;line-height:16px;color:#000;word-spacing:0.71px"><span class="w" style="transform:scaleX(0.9361);margin-right:-2.90px">125-A15</span> <span class="w" style="transform:scaleX(0.9179);margin-right:-5.97px">DIN_125-A15</span> <span class="w" style="transform:scaleX(0.8078);margin-right:-1.93px">.L</span></div>
<div class="t" style="left:46.0px;top:367.5px;font:normal 12px 'Liberation Sans', sans-serif;line-height:16px;color:#000;word-spacing:0.70px"><span class="w" style="transform:scaleX(0.9106);margin-right:-4.85px">VX118611</span> <span class="w" style="transform:scaleX(0.9164);margin-right:-5.52px">DIN_1434-A</span> <span class="w" style="transform:scaleX(0.8058);margin-right:-1.95px">.L</span></div>
<div class="t" style="left:46.0px;top:385.5px;font:normal 12px 'Liberation Sans', sans-serif;line-height:16px;color:#000;word-spacing:0.68px"><span class="w" style="transform:scaleX(0.8906);margin-right:-6.03px">VX114736</span> <span class="w" style="transform:scaleX(0.8890);margin-right:-5.26px">DIN_610</span> <span class="w" style="transform:scaleX(0.8010);margin-right:-1.99px">.L</span></div>
<div class="t" style="left:46.0px;top:403.5px;font:normal 12px 'Liberation Sans', sans-serif;line-height:16px;color:#000;word-spacing:0.68px"><span class="w" style="transform:scaleX(0.8906);margin-right:-6.03px">VX114736</span> <span class="w" style="transform:scaleX(0.8890);margin-right:-5.26px">DIN_610</span> <span class="w" style="transform:scaleX(0.8010);margin-right:-1.99px">.L</span></div>
<div class="t" style="left:46.0px;top:421.5px;font:normal 12px 'Liberation Sans', sans-serif;line-height:16px;color:#0000ff;word-spacing:0.71px"><span class="w" style="transform:scaleX(0.8835);margin-right:-6.53px">VX123021</span> <span class="w" style="transform:scaleX(0.9067);margin-right:-7.91px">EN_10056-1-L1</span></div>
<div class="t" style="left:46.0px;top:439.5px;font:normal 12px 'Liberation Sans', sans-serif;line-height:16px;color:#0000ff;word-spacing:0.71px"><span class="w" style="transform:scaleX(0.8835);margin-right:-6.53px">VX123021</span> <span class="w" style="transform:scaleX(0.9067);margin-right:-7.91px">EN_10056-1-L1</span></div>
<div class="t" style="left:2.3px;top:0.5px;font:normal 12px 'Liberation Sans', sans-serif;line-height:16px;color:#000;word-spacing:0.28px"><span class="w" style="transform:scaleX(0.8857);margin-right:-7.71px">Kokoonpano</span></div>
<div class="t" style="left:9.0px;top:598.5px;font:normal 12px 'Liberation Sans', sans-serif;line-height:16px;color:#000;word-spacing:0.72px"><span class="w" style="transform:scaleX(0.8859);margin-right:-3.65px">D.O.F</span>  <span class="w" style="transform:scaleX(0.9536);margin-right:-2.17px">60/38/22</span></div>
<div class="t" style="left:25.0px;top:620.5px;font:normal 12px 'Liberation Sans', sans-serif;line-height:16px;color:#000;word-spacing:0.87px"><span class="w" style="transform:scaleX(0.9399);margin-right:-5.38px">Samankeskisyys</span></div>
<div class="t" style="left:25.0px;top:639.5px;font:normal 12px 'Liberation Sans', sans-serif;line-height:16px;color:#000;word-spacing:0.87px"><span class="w" style="transform:scaleX(0.9399);margin-right:-5.38px">Samankeskisyys</span></div>
<div class="t" style="left:25.0px;top:658.5px;font:normal 12px 'Liberation Sans', sans-serif;line-height:16px;color:#000;word-spacing:0.85px"><span class="w" style="transform:scaleX(0.9136);margin-right:-3.86px">Etäisyys</span> <span class="w" style="transform:scaleX(0.8905);margin-right:-2.70px">(0.1)</span></div>
<div class="t" style="left:25.0px;top:677.5px;font:normal 12px 'Liberation Sans', sans-serif;line-height:16px;color:#000;word-spacing:0.84px"><span class="w" style="transform:scaleX(0.9101);margin-right:-4.02px">Etäisyys</span> <span class="w" style="transform:scaleX(0.8979);margin-right:-3.20px">(0.02)</span></div>
<div class="t" style="left:25.0px;top:696.5px;font:normal 12px 'Liberation Sans', sans-serif;line-height:16px;color:#000;word-spacing:1.11px"><span class="w" style="transform:scaleX(0.9670);margin-right:-2.05px">Yhtenevyys</span></div>
<div class="t" style="left:32.0px;top:736.5px;font:normal 12px 'Liberation Sans', sans-serif;line-height:16px;color:#000;word-spacing:0.30px"><span class="w" style="transform:scaleX(0.8901);margin-right:-7.41px">Kokoonpano</span></div>
<div class="t" style="left:127.0px;top:735.5px;font:normal 12px 'Liberation Sans', sans-serif;line-height:16px;color:#000;word-spacing:0.44px"><span class="w" style="transform:scaleX(0.8966);margin-right:-7.61px">Tuoterakenne</span></div>
<div class="t" style="left:321.0px;top:57.5px;font:bold 23.5px 'Liberation Sans', sans-serif;line-height:16px;color:#000;word-spacing:0.00px"><span class="w" style="transform:scaleX(0.9940);margin-right:-0.08px">4</span></div>
<div class="t" style="left:323.5px;top:105.5px;font:bold 23.5px 'Liberation Sans', sans-serif;line-height:16px;color:#000;word-spacing:0.00px"><span class="w" style="transform:scaleX(0.8411);margin-right:-2.08px">1</span></div>
<div class="t" style="left:326.0px;top:234.5px;font:bold 23.5px 'Liberation Sans', sans-serif;line-height:16px;color:#000;word-spacing:0.00px"><span class="w" style="transform:scaleX(0.9176);margin-right:-1.08px">2</span></div>
<div class="t" style="left:326.0px;top:423.0px;font:bold 23.5px 'Liberation Sans', sans-serif;line-height:16px;color:#000;word-spacing:0.00px"><span class="w" style="transform:scaleX(0.9176);margin-right:-1.08px">3</span></div>
<div class="a" style="left:426px;top:0;width:1px;height:754px;background:#fbfbfb"></div>
<div class="a" style="left:427px;top:0;width:1056px;height:753px;background:linear-gradient(#d9dbd7,#ffffff);border-left:1px solid #646464;border-right:1px solid #646464;border-bottom:1px solid #646464"></div>
<div class="a" style="left:1486px;top:0;width:6px;height:758px;background:#fcfcfc"></div>
<svg class="a" style="left:0;top:0" width="1492" height="758" viewBox="0 0 1492 758">
<defs>
<linearGradient id="gH" gradientUnits="userSpaceOnUse" x1="767.8" y1="382.1" x2="812.2" y2="497.9"><stop offset="0" stop-color="#f3ad48"/><stop offset="0.22" stop-color="#fdc257"/><stop offset="0.5" stop-color="#fff578"/><stop offset="0.62" stop-color="#fff070"/><stop offset="0.85" stop-color="#fdb851"/><stop offset="1" stop-color="#eda344"/></linearGradient>
<linearGradient id="gA" gradientUnits="userSpaceOnUse" x1="793.6" y1="365.8" x2="842.4" y2="492.8"><stop offset="0" stop-color="#f3ad48"/><stop offset="0.22" stop-color="#fdc257"/><stop offset="0.5" stop-color="#fff578"/><stop offset="0.62" stop-color="#fff070"/><stop offset="0.85" stop-color="#fdb851"/><stop offset="1" stop-color="#eda344"/></linearGradient>
<linearGradient id="gB" gradientUnits="userSpaceOnUse" x1="795.8" y1="353.7" x2="852.0" y2="500.3"><stop offset="0" stop-color="#f5b04a"/><stop offset="0.15" stop-color="#fdc658"/><stop offset="0.36" stop-color="#fff87a"/><stop offset="0.52" stop-color="#fff578"/><stop offset="0.8" stop-color="#fdb851"/><stop offset="1" stop-color="#eda344"/></linearGradient>
<linearGradient id="gFil" x1="0" x2="1" y1="0" y2="0"><stop offset="0" stop-color="#fdb851"/><stop offset="0.3" stop-color="#f7b14c"/><stop offset="0.75" stop-color="#c58b3b"/><stop offset="1" stop-color="#98692d"/></linearGradient>
<linearGradient id="gLs" gradientUnits="userSpaceOnUse" x1="859.5" y1="170.6" x2="874" y2="169.8"><stop offset="0" stop-color="#9c6f30"/><stop offset="0.18" stop-color="#d8963f"/><stop offset="0.5" stop-color="#f6b04b"/><stop offset="1" stop-color="#fdb851"/></linearGradient>
<linearGradient id="gRs" gradientUnits="userSpaceOnUse" x1="1047.7" y1="92.2" x2="1059.7" y2="92.8"><stop offset="0" stop-color="#8a642d"/><stop offset="0.25" stop-color="#c98e3c"/><stop offset="0.6" stop-color="#f4ae4a"/><stop offset="1" stop-color="#fdb851"/></linearGradient>
<linearGradient id="gSock" gradientUnits="userSpaceOnUse" x1="1074" y1="320" x2="1090" y2="344"><stop offset="0" stop-color="#fdc555"/><stop offset="0.4" stop-color="#ffea68"/><stop offset="0.75" stop-color="#ffdf62"/><stop offset="1" stop-color="#fdc051"/></linearGradient>
<linearGradient id="gRope" gradientUnits="userSpaceOnUse" x1="1200" y1="262" x2="1207" y2="283"><stop offset="0" stop-color="#7b8381"/><stop offset="0.4" stop-color="#a4acaa"/><stop offset="0.7" stop-color="#8e9694"/><stop offset="1" stop-color="#6e7674"/></linearGradient>
<linearGradient id="gRope2" gradientUnits="userSpaceOnUse" x1="1160" y1="290" x2="1167" y2="311"><stop offset="0" stop-color="#7b8381"/><stop offset="0.4" stop-color="#a6aeac"/><stop offset="0.7" stop-color="#8e9694"/><stop offset="1" stop-color="#6e7674"/></linearGradient>
<filter id="fRope" x="0" y="0" width="1" height="1" color-interpolation-filters="sRGB"><feTurbulence type="fractalNoise" baseFrequency="0.3" numOctaves="2" seed="7" result="n"/><feColorMatrix in="n" type="matrix" values="0 0 0 0 0.42  0 0 0 0 0.46  0 0 0 0 0.45  2.3 0 0 0 -0.92" result="c"/><feComposite in="c" in2="SourceGraphic" operator="in" result="t"/><feMerge><feMergeNode in="SourceGraphic"/><feMergeNode in="t"/></feMerge></filter>
<linearGradient id="gBlk" gradientUnits="userSpaceOnUse" x1="0" y1="312" x2="0" y2="350"><stop offset="0" stop-color="#c58a3a"/><stop offset="1" stop-color="#7b5a2a"/></linearGradient>
</defs>
<polygon points="1099.2,304.9 1289.0,233.2 1294.0,233.5 1298.5,238.0 1298.8,245.0 1296.0,250.3 1292.0,252.0 1118.0,320.0" fill="url(#gRope)" stroke="#3e4644" stroke-width="0.7" stroke-linejoin="round" filter="url(#fRope)"/>
<ellipse cx="1293.5" cy="242" rx="4.8" ry="9.3" transform="rotate(-20 1293.5 242)" fill="#949c9a" stroke="#3e4644" stroke-width="0.7" filter="url(#fRope)"/>
<polygon points="1106.6,309.5 1192.5,277.5 1200.0,275.6 1220.5,274.2 1223.8,275.4 1225.7,279.0 1226.2,285.0 1225.6,290.0 1223.5,292.5 1210.0,295.0 1197.0,296.5 1118.6,328.9" fill="url(#gRope2)" stroke="#2e3634" stroke-width="0.7" stroke-linejoin="round" filter="url(#fRope)"/>
<path d="M1122.3 303.8 L1127.5 310.0 L1130.0 316.0 L1129.7 323.5" fill="none" stroke="#3a3f3d" stroke-width="0.7" stroke-linecap="round"/>
<path d="M1194.5 277.5 L1197.5 284.0 L1198.0 291.0 L1197.0 296.5" fill="none" stroke="#3a3f3d" stroke-width="0.7" stroke-linecap="round"/>
<path d="M1106.6 309.5 L1192.5 277.5" fill="none" stroke="#22262a" stroke-width="0.9" stroke-linecap="round"/>
<polygon points="1054.0,303.1 1073.0,295.9 1077.0,295.3 1080.5,296.4 1102.9,307.7 1109.0,311.5 1113.8,316.8 1117.0,323.5 1117.8,330.0 1117.8,346.5 1116.6,351.0 1113.8,354.0 1055.8,398.1 1047.5,405.5 1040.0,400.0 1040.0,310.0" fill="#fdb851" stroke="#1a1208" stroke-width="0.8" stroke-linejoin="round" />
<polygon points="1051.2,345.5 1102.9,307.7 1109.0,311.5 1113.8,316.8 1117.0,323.5 1117.8,330.0 1117.8,336.3 1056.8,381.5 1054.0,372.5 1049.6,365.5" fill="url(#gSock)" stroke="#1a1208" stroke-width="0.8" stroke-linejoin="round" />
<path d="M1055.8 391.7 L1116.8 348.3" fill="none" stroke="#1a1208" stroke-width="0.8" stroke-linecap="round"/>
<path d="M1049.4 365.0 L1053.0 369.5 L1054.9 376.0 L1055.3 398.0" fill="none" stroke="#1a1208" stroke-width="0.8" stroke-linecap="round"/>
<polygon points="769.2,4.3 807.1,17.8 782.7,22.8 772.2,35.0" fill="#7b5a2a" stroke="#1a1208" stroke-width="0.6" stroke-linejoin="round" />
<polygon points="730.3,103.6 772.2,35.0 782.7,22.8 807.1,17.8 828.2,19.8 829.5,35.0 836.3,140.0 846.0,287.0 852.0,440.0 773.0,440.0" fill="#f2a640" stroke="#1a1208" stroke-width="0.8" stroke-linejoin="round" />
<polygon points="731.6,106.0 781.4,35.0 787.3,24.4 828.2,19.8 829.5,35.0 836.3,140.0 846.0,287.0 852.0,440.0 774.2,440.0" fill="#fdb851" stroke="#1a1208" stroke-width="0.8" stroke-linejoin="round" />
<path d="M730.3 103.6 L773.0 440.0" fill="none" stroke="#2a1c08" stroke-width="1.6" stroke-linecap="round"/>
<polygon points="780.1,318.8 857.6,295.0 860.0,332.0 862.0,430.0 788.0,430.0" fill="#fdb851" stroke="#1a1208" stroke-width="0.8" stroke-linejoin="round" />
<polygon points="769.8,310.1 780.1,318.8 785.6,371.8 787.0,400.0 778.0,400.0 776.9,377.3" fill="url(#gBlk)" stroke="#1a1208" stroke-width="0.8" stroke-linejoin="round" />
<polygon points="769.8,310.1 845.7,287.1 857.6,295.0 780.1,318.8" fill="#fec35a" stroke="#1a1208" stroke-width="0.8" stroke-linejoin="round" />
<polygon points="784.9,382.5 785.0,377.5 785.4,372.9 786.0,368.7 787.0,365.0 788.2,361.7 789.7,358.9 791.5,356.6 793.5,354.9 795.8,353.7 854.8,333.6 857.1,332.9 859.7,332.9 862.5,333.4 865.4,334.4 868.4,335.9 871.5,338.0 874.7,340.6 877.9,343.7 881.2,347.2 884.5,351.2 887.8,355.6 891.0,360.3 894.2,365.4 897.2,370.8 900.2,376.4 903.0,382.3 905.7,388.3 908.1,394.5 910.4,400.7 912.5,406.9 914.3,413.2 915.9,419.3 917.2,425.4 918.3,431.3 919.0,437.0 919.5,442.4 919.7,447.6 919.7,452.4 919.3,456.9 918.7,460.9 917.7,464.6 916.5,467.7 915.1,470.4 913.4,472.6 911.4,474.3 909.2,475.4 852.0,500.3 849.6,500.9 846.9,501.0 844.1,500.5 841.1,499.4 838.0,497.8 834.8,495.6 831.5,493.0 828.1,489.8 824.7,486.1 821.3,482.0 817.9,477.5 814.6,472.6 811.3,467.4 808.2,461.8 805.1,456.0 802.2,449.9 799.5,443.7 796.9,437.4 794.6,430.9 792.4,424.5 790.6,418.0 788.9,411.7 787.6,405.4 786.5,399.3 785.7,393.4 785.1,387.8" fill="url(#gB)" stroke="#1a1208" stroke-width="0.8" stroke-linejoin="round" />
<ellipse cx="823.9" cy="427.0" rx="28.9" ry="78.5" transform="rotate(-21.0 823.9 427.0)" fill="#7b5a2a" stroke="#1a1208" stroke-width="0.8"/>
<polygon points="784.3,390.8 784.3,386.4 784.6,382.4 785.2,378.8 786.0,375.6 787.1,372.7 788.4,370.3 790.0,368.3 791.7,366.8 793.6,365.8 799.5,363.5 801.7,363.0 804.0,362.9 806.4,363.4 809.0,364.3 811.7,365.7 814.5,367.5 817.3,369.9 820.2,372.6 823.2,375.8 826.1,379.3 829.0,383.2 831.9,387.5 834.8,392.1 837.5,396.9 840.1,401.9 842.6,407.1 845.0,412.5 847.2,418.0 849.3,423.6 851.1,429.2 852.8,434.8 854.2,440.3 855.4,445.7 856.3,451.0 857.0,456.1 857.4,460.9 857.6,465.6 857.6,469.9 857.2,473.9 856.7,477.5 855.9,480.8 854.8,483.6 853.5,486.0 852.0,488.0 850.2,489.5 848.3,490.5 842.4,492.8 840.2,493.3 838.0,493.4 835.5,492.9 832.9,492.0 830.2,490.6 827.4,488.8 824.6,486.4 821.7,483.7 818.7,480.5 815.8,477.0 812.9,473.1 810.0,468.8 807.1,464.2 804.4,459.4 801.8,454.4 799.2,449.1 796.9,443.8 794.7,438.3 792.6,432.7 790.8,427.1 789.1,421.5 787.7,416.0 786.5,410.6 785.6,405.3 784.9,400.2 784.5,395.4" fill="url(#gA)" stroke="#1a1208" stroke-width="0.8" stroke-linejoin="round" />
<ellipse cx="818.0" cy="429.3" rx="25.0" ry="68.0" transform="rotate(-21.0 818.0 429.3)" fill="#7b5a2a" stroke="#1a1208" stroke-width="0.8"/>
<polygon points="759.2,404.9 759.3,400.9 759.6,397.3 760.1,394.0 760.9,391.0 761.8,388.4 763.0,386.2 764.4,384.4 766.0,383.1 767.8,382.1 796.0,371.9 797.9,371.4 800.0,371.4 802.2,371.7 804.5,372.6 806.9,373.8 809.5,375.5 812.0,377.6 814.7,380.1 817.3,383.0 820.0,386.2 822.6,389.7 825.2,393.6 827.8,397.7 830.3,402.1 832.7,406.6 835.0,411.4 837.1,416.2 839.1,421.2 840.9,426.2 842.6,431.3 844.1,436.3 845.4,441.3 846.4,446.2 847.3,451.0 847.9,455.6 848.3,460.0 848.5,464.2 848.5,468.1 848.2,471.7 847.6,475.0 846.9,477.9 845.9,480.5 844.8,482.7 843.4,484.4 841.8,485.8 840.0,486.7 812.2,497.9 810.3,498.4 808.2,498.4 806.0,498.0 803.6,497.2 801.1,495.9 798.6,494.2 796.0,492.1 793.3,489.6 790.7,486.7 788.0,483.5 785.3,479.9 782.7,476.0 780.1,471.9 777.6,467.5 775.2,462.9 772.9,458.1 770.7,453.2 768.7,448.2 766.9,443.1 765.2,438.0 763.7,432.9 762.4,427.9 761.3,422.9 760.5,418.1 759.8,413.5 759.4,409.1" fill="url(#gH)" stroke="#1a1208" stroke-width="0.8" stroke-linejoin="round" />
<ellipse cx="790.0" cy="440.0" rx="22.8" ry="62.0" transform="rotate(-21.0 790.0 440.0)" fill="#e9b555" stroke="#1a1208" stroke-width="0.8"/>
<ellipse cx="789.4" cy="440.2" rx="22.0" ry="60.8" transform="rotate(-21.0 789.4 440.2)" fill="#7b5a2a" stroke="#1a1208" stroke-width="0.6"/>
<polygon points="859.5,170.6 927.8,70.9 971.8,63.0 1065.5,91.0 1035.8,587.4 1022.8,585.0 976.5,545.0 970.0,542.0 965.0,541.4 960.0,542.0 955.1,543.4 894.6,573.1 882.3,570.7" fill="#fdb851" stroke="#1a1208" stroke-width="0.8" stroke-linejoin="round" />
<path d="M927.8 70.9L971.8 63L1065.5 91L1058 93.5Q1052 93.6 1047.7 92.2L981.2 72Q972 68.8 966 69.2L954.7 70.4L935 73.2Z" fill="#fdc45d" stroke="#1a1208" stroke-width="0.8" stroke-linejoin="round"/>
<polygon points="859.5,170.6 927.8,70.9 935.0,73.2 875.6,163.4" fill="#f9b34c" stroke="#1a1208" stroke-width="0.8" stroke-linejoin="round" />
<polygon points="859.5,170.6 875.6,163.4 894.6,573.1 882.3,570.7" fill="url(#gLs)" stroke="#1a1208" stroke-width="0.8" stroke-linejoin="round" />
<path d="M954.7 70.4L966 69.2Q972 68.8 981.2 72L977.2 420L976.5 545L970 542L965 541.4L960 542L955.1 543.4Z" fill="url(#gFil)" stroke="none"/>
<polygon points="981.2,72.0 1047.7,92.2 1041.2,220.0 1031.1,420.0 1022.8,585.0 976.5,545.0 977.2,420.0" fill="#7b5a2a" stroke="#1a1208" stroke-width="0.8" stroke-linejoin="round" />
<polygon points="1047.7,92.2 1052.0,93.6 1058.0,93.5 1060.8,92.5 1033.5,586.8 1022.8,585.0" fill="url(#gRs)" stroke="#1a1208" stroke-width="0.8" stroke-linejoin="round" />
<polygon points="1060.8,92.5 1065.5,91.0 1035.8,587.4 1033.5,586.8" fill="#f2aa46" stroke="#1a1208" stroke-width="0.8" stroke-linejoin="round" />
<path d="M954.7 70.4 L955.1 543.4" fill="none" stroke="#1a1208" stroke-width="0.8" stroke-linecap="round"/>
<ellipse cx="918.5" cy="476.5" rx="26.5" ry="31.5" transform="rotate(28 918.5 476.5)" fill="#244659" stroke="#0c1a22" stroke-width="0.8"/>
<ellipse cx="920.5" cy="476.5" rx="24" ry="29.5" transform="rotate(28 920.5 476.5)" fill="#264a5c" stroke="#0c1a22" stroke-width="0.6"/>
<polygon points="900.7,475.9 920.9,454.6 932.1,464.7 911.4,484.3" fill="#25485a" stroke="#0a161d" stroke-width="0.7" stroke-linejoin="round" />
<polygon points="920.9,454.6 942.8,457.4 953.4,467.0 932.1,464.7" fill="#234556" stroke="#0a161d" stroke-width="0.7" stroke-linejoin="round" />
<polygon points="900.7,475.9 911.4,484.3 912.5,509.0 901.3,499.4" fill="#10232d" stroke="#0a161d" stroke-width="0.7" stroke-linejoin="round" />
<polygon points="932.1,464.7 953.4,467.0 953.4,488.8 933.8,510.1 912.5,509.0 911.4,484.3" fill="#264a5c" stroke="#0a161d" stroke-width="0.7" stroke-linejoin="round" />
</svg>
<svg class="a" style="left:0;top:0" width="1492" height="758" viewBox="0 0 1492 758">
<rect x="619" y="4" width="95" height="30" fill="rgba(246,246,246,0.81)"/><rect x="810" y="4" width="383" height="30" fill="rgba(246,246,246,0.81)"/>
<rect x="618.5" y="3.5" width="575" height="31" fill="none" stroke="#bcbcbc"/>
<rect x="714" y="4" width="96" height="30" fill="rgba(255,224,155,0.82)"/>
<g fill="#4d4d4d"><path d="M622.8 27.8L629.2 19.2L631.2 21Z"/><path d="M637.5 9L642.3 13.8L636.2 19.8L637 22.6L634.6 25L625.8 17.4L628.2 15.4L631.6 15.6Z"/></g>
<rect x="653.5" y="9.3" width="15.5" height="2.6" fill="#7be63e" stroke="#b9b9b9" stroke-width="0.8"/>
<rect x="670.3" y="13.3" width="2.6" height="15.3" fill="#7be63e" stroke="#b9b9b9" stroke-width="0.8"/>
<path d="M657.6 15v4.5q0 5 5 5h4.5" fill="none" stroke="#777" stroke-width="1.2"/><path d="M655.2 17l2.4-2.8l2.4 2.8M665.2 22l2.6 2.5l-2.6 2.5" fill="none" stroke="#777" stroke-width="1.2"/>
<rect x="685.5" y="13.5" width="25.5" height="11" fill="#faf295" stroke="#a07820" stroke-width="1.1"/>
<path d="M687.5 14v1.8" stroke="#9a7a2a" stroke-width="0.7"/>
<path d="M689.4 14v1.8" stroke="#9a7a2a" stroke-width="0.7"/>
<path d="M691.4 14v4.2" stroke="#9a7a2a" stroke-width="0.7"/>
<path d="M693.3 14v1.8" stroke="#9a7a2a" stroke-width="0.7"/>
<path d="M695.3 14v1.8" stroke="#9a7a2a" stroke-width="0.7"/>
<path d="M697.3 14v4.2" stroke="#9a7a2a" stroke-width="0.7"/>
<path d="M699.2 14v1.8" stroke="#9a7a2a" stroke-width="0.7"/>
<path d="M701.2 14v1.8" stroke="#9a7a2a" stroke-width="0.7"/>
<path d="M703.1 14v4.2" stroke="#9a7a2a" stroke-width="0.7"/>
<path d="M705.1 14v1.8" stroke="#9a7a2a" stroke-width="0.7"/>
<path d="M707.1 14v1.8" stroke="#9a7a2a" stroke-width="0.7"/>
<path d="M709.0 14v4.2" stroke="#9a7a2a" stroke-width="0.7"/>
<circle cx="727.4" cy="12.6" r="3" fill="#fff" stroke="#222" stroke-width="1"/><circle cx="727.4" cy="12.6" r="1" fill="none" stroke="#222" stroke-width="0.9"/>
<polygon points="732.4,15.2 732.4,25.7 734.8,23.5 736.5,27.2 738.3,26.4 736.6,22.8 739.8,22.8" fill="#fff" stroke="#707070" stroke-width="0.9" stroke-linejoin="round"/>
<path d="M756.6 18L764.4 10.8" stroke="#222" stroke-width="3"/><path d="M756.9 17.7L764.1 11.1" stroke="#fff" stroke-width="1.1"/>
<polygon points="764.4,15.4 764.4,25.9 766.8,23.7 768.5,27.4 770.3,26.6 768.6,23.0 771.8,23.0" fill="#fff" stroke="#707070" stroke-width="0.9" stroke-linejoin="round"/>
<polygon points="786.5,14.2 790,9.6 797.8,9.6 794.4,14.2" fill="#fff" stroke="#111" stroke-width="1.1" stroke-linejoin="round"/>
<polygon points="796.4,15.4 796.4,25.9 798.8,23.7 800.5,27.4 802.3,26.6 800.6,23.0 803.8,23.0" fill="#fff" stroke="#707070" stroke-width="0.9" stroke-linejoin="round"/>
<path d="M825 9.5h-6.8v8h6.8v-2.2h-4v-3.6h4z" fill="#fff" stroke="#111" stroke-width="1.1"/>
<polygon points="828.4,15.2 828.4,25.7 830.8,23.5 832.5,27.2 834.3,26.4 832.6,22.8 835.8,22.8" fill="#fff" stroke="#707070" stroke-width="0.9" stroke-linejoin="round"/>
<rect x="848.5" y="13.5" width="15" height="15" fill="#7be63e"/>
<g fill="none" stroke="#a3a3a3" stroke-width="1"><rect x="852.5" y="9.5" width="15" height="15"/><rect x="848.5" y="13.5" width="15" height="15"/><path d="M848.5 13.5L852.5 9.5M863.5 13.5L867.5 9.5M848.5 28.5L852.5 24.5M863.5 28.5L867.5 24.5"/></g>
<polygon points="880.5,13.5 884.5,9.5 899.5,9.5 895.5,13.5" fill="#7be63e"/>
<g fill="none" stroke="#a3a3a3" stroke-width="1"><rect x="884.5" y="9.5" width="15" height="15"/><rect x="880.5" y="13.5" width="15" height="15"/><path d="M880.5 13.5L884.5 9.5M895.5 13.5L899.5 9.5M880.5 28.5L884.5 24.5M895.5 28.5L899.5 24.5"/></g>
<polygon points="912.5,13.5 916.5,9.5 916.5,24.5 912.5,28.5" fill="#7be63e"/>
<g fill="none" stroke="#a3a3a3" stroke-width="1"><rect x="916.5" y="9.5" width="15" height="15"/><rect x="912.5" y="13.5" width="15" height="15"/><path d="M912.5 13.5L916.5 9.5M927.5 13.5L931.5 9.5M912.5 28.5L916.5 24.5M927.5 28.5L931.5 24.5"/></g>
<polygon points="959.5,13.5 963.5,9.5 963.5,24.5 959.5,28.5" fill="#7be63e"/>
<g fill="none" stroke="#a3a3a3" stroke-width="1"><rect x="948.5" y="9.5" width="15" height="15"/><rect x="944.5" y="13.5" width="15" height="15"/><path d="M944.5 13.5L948.5 9.5M959.5 13.5L963.5 9.5M944.5 28.5L948.5 24.5M959.5 28.5L963.5 24.5"/></g>
<g stroke="#c0c4be" stroke-width="1" stroke-linejoin="round"><polygon points="976,13.3 982.1,8.1 995.6,12.5 990,18.1" fill="#e9f6e5"/><polygon points="976,13.3 990,18.1 990,29.9 976,25.1" fill="#e6f5e2"/><polygon points="990,18.1 995.6,12.5 995.6,23.8 990,29.9" fill="#c2ecb6"/></g>
<rect x="1008.5" y="13.5" width="15" height="15" fill="#7be63e"/>
<g fill="none" stroke="#a3a3a3" stroke-width="1"><rect x="1012.5" y="9.5" width="15" height="15"/><rect x="1008.5" y="13.5" width="15" height="15"/><path d="M1008.5 13.5L1012.5 9.5M1023.5 13.5L1027.5 9.5M1008.5 28.5L1012.5 24.5M1023.5 28.5L1027.5 24.5"/></g>
<polygon points="1012.4,13.8 1012.4,25.6 1015.1,23.1 1017.0,27.2 1019.0,26.3 1017.1,22.3 1020.7,22.3" fill="#fff" stroke="#333" stroke-width="1.0" stroke-linejoin="round"/>
<polygon points="1041.2,7.2 1048.8,7.2 1045,10.8" fill="#7d7d7d"/>
<rect x="1040.5" y="12.5" width="19" height="16" fill="#fff" stroke="#b5b5b5"/>
<path d="M1042.5 15.5h15" stroke="#9a9a9a" stroke-width="1"/>
<path d="M1042.5 17.5h15" stroke="#9a9a9a" stroke-width="1"/>
<path d="M1042.5 19.5h15" stroke="#9a9a9a" stroke-width="1"/>
<path d="M1042.5 21.5h15" stroke="#9a9a9a" stroke-width="1"/>
<path d="M1042.5 23.5h15" stroke="#9a9a9a" stroke-width="1"/>
<path d="M1042.5 25.5h15" stroke="#9a9a9a" stroke-width="1"/>
<g stroke="#1f6e98" stroke-width="1.3" stroke-linejoin="round"><polygon points="1073.6,13.8 1077.1,10.3 1083.6,10.3 1080.1,13.8" fill="#d8eef8"/><polygon points="1073.6,13.8 1080.1,13.8 1080.1,22.5 1088.4,22.5 1088.4,27.3 1073.6,27.3" fill="#fff"/><polygon points="1073.6,13.8 1080.1,13.8 1080.1,23.8 1073.6,27.3" fill="#a5d6ee"/><polygon points="1080.1,13.8 1083.6,10.3 1083.6,19 1080.1,22.5" fill="#2f86b5"/><polygon points="1080.1,22.5 1083.6,19 1091.5,19 1088.4,22.5" fill="#fff"/><polygon points="1088.4,22.5 1091.5,19 1091.5,23.8 1088.4,27.3" fill="#fff"/><path d="M1075 25.2h13" stroke-width="1"/></g>
<g fill="none" stroke="#bdbdbd" stroke-width="1"><rect x="1107.5" y="11.5" width="17" height="8"/><rect x="1104.5" y="14.5" width="17" height="8"/><path d="M1104.5 14.5l3-3M1121.5 14.5l3-3"/></g>
<g stroke="#c9a51a" stroke-width="1" stroke-linejoin="round"><polygon points="1104.5,22 1107.5,19.5 1124.5,19.5 1121.5,22" fill="#fbe25a"/><polygon points="1104.5,22 1121.5,22 1121.5,28.5 1104.5,28.5" fill="#fad72a"/><polygon points="1121.5,22 1124.5,19.5 1124.5,26 1121.5,28.5" fill="#e9c31c"/></g>
<g fill="none" stroke="#bdbdbd" stroke-width="1"><rect x="1139.5" y="11.5" width="17" height="8"/><rect x="1136.5" y="14.5" width="17" height="8"/><path d="M1136.5 14.5l3-3M1153.5 14.5l3-3"/></g>
<g stroke="#c9a51a" stroke-width="1" stroke-linejoin="round"><polygon points="1136.5,22 1139.5,19.5 1156.5,19.5 1153.5,22" fill="#fbe25a"/><polygon points="1136.5,22 1153.5,22 1153.5,28.5 1136.5,28.5" fill="#fad72a"/><polygon points="1153.5,22 1156.5,19.5 1156.5,26 1153.5,28.5" fill="#e9c31c"/></g>
<path d="M1140.5 8.6l11.2 8.6M1151.7 8.6l-11.2 8.6" stroke="#c8202c" stroke-width="3.2"/>
<rect x="1167.5" y="16" width="15" height="11.5" fill="#f4f7fa" stroke="#7fb0de" stroke-width="1"/><path d="M1167 16h16" stroke="#3d86c6" stroke-width="1.6"/>
<polygon points="1179.2,9.4 1188.6,9.4 1188.6,18.6 1185.7,15.8 1179.7,22.3 1175.7,18.4 1182.1,12.3" fill="#f3f6f9" stroke="#2f7fc3" stroke-width="1.1" stroke-linejoin="miter"/>
<path d="M1388.5 0V15.5Q1388.5 18.5 1391.5 18.5H1479.5Q1482.5 18.5 1482.5 15.5V0Z" fill="#f2f2f0" stroke="#c2c2c0"/>
<path d="M1419.5 0v18M1451.5 0v18" stroke="#c2c2c0"/>
<path d="M1399 13.5h11" stroke="#5a5a5a" stroke-width="2"/>
<path d="M1432 4.5h10v8.5" fill="none" stroke="#5a5a5a" stroke-width="1"/><rect x="1430.5" y="6.5" width="10" height="8" fill="#f2f2f0" stroke="#5a5a5a"/><path d="M1430 7h11" stroke="#5a5a5a" stroke-width="1.6"/>
<rect x="1458" y="2" width="20" height="15" fill="#c75050"/><path d="M1464.5 5.5l7 7M1471.5 5.5l-7 7" stroke="#fff" stroke-width="1.7"/>
<g stroke-linecap="round"><path d="M479 701L470 678.5" stroke="#5a5af0" stroke-width="2.2"/><circle cx="469.8" cy="677" r="2.6" fill="#2222ee"/><polygon points="466.5,669.5 472.5,676 467,679.5" fill="#7a7af5"/><path d="M479 701L488 726" stroke="#22dd22" stroke-width="2.4"/><polygon points="484.5,726 492,722.5 491,732.5" fill="#22dd22"/><path d="M479 701L443 718.5" stroke="#f08080" stroke-width="1.6"/><polygon points="429.5,724.5 441,715.5 442.5,720.5" fill="#f07a7a"/></g>
<text transform="translate(461,670) scale(0.68,1)" font-family="Liberation Sans, sans-serif" font-size="15.5" fill="#6a6ad8">Z</text>
<text transform="translate(489,742.8) scale(0.76,1)" font-family="Liberation Sans, sans-serif" font-size="14" fill="#55dd55">Y</text>
</svg>
</body></html>
